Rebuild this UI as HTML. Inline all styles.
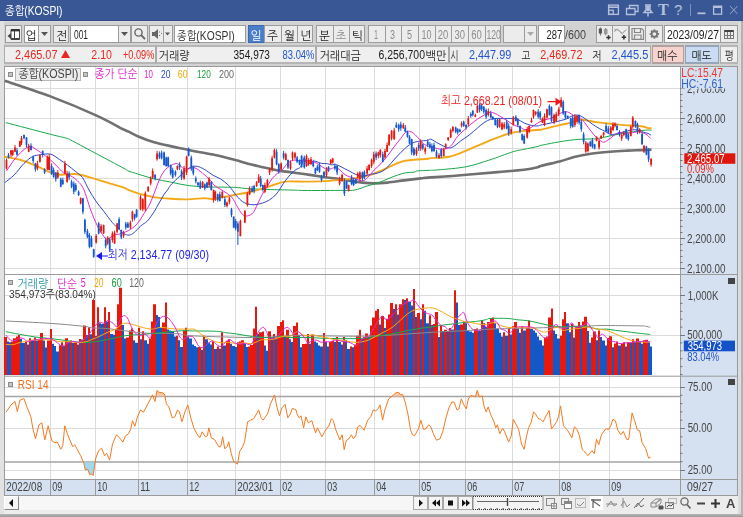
<!DOCTYPE html>
<html lang="ko"><head><meta charset="utf-8"><title>종합(KOSPI)</title>
<style>
*{box-sizing:border-box;margin:0;padding:0}
html,body{width:743px;height:517px;overflow:hidden;background:#d2d2d2;}
body{position:relative;font-family:"Liberation Sans","NanumGothic","Noto Sans CJK KR",sans-serif;font-size:11px;color:#111;line-height:1}
.a{position:absolute;white-space:nowrap}
#title{left:0;top:0;width:743px;height:21px;background:#3a5795;color:#fff;border-bottom:1px solid #30498a}
#title span{position:absolute;left:5px;top:4px;font-size:12px;letter-spacing:-0.3px}
.btn{white-space:nowrap;overflow:hidden;position:absolute;top:25px;height:18px;background:#ececec;border:1px solid #9c9c9c;text-align:center;font-size:12px;line-height:16px;color:#111}
.inp{white-space:nowrap;overflow:hidden;position:absolute;top:25px;height:18px;background:#fff;border:1px solid #9c9c9c;font-size:11px;line-height:16px;color:#333;padding-left:3px}
.dis{color:#8c8c8c}
.cell{position:absolute;top:45px;height:19px;background:#efefef;border:1px solid #aaa;border-top:2px solid #b6b6b6;border-bottom:2px solid #b6b6b6;font-size:11px;line-height:15px}
.cell span{position:absolute;top:0;white-space:nowrap}
.red{color:#e8281e}.blue{color:#2255cc}
.ko{font-size:12px}
</style></head><body>
<div class="a" style="left:0;top:21px;width:743px;height:1px;background:#dadada"></div>
<div class="a" style="left:0;top:496px;width:743px;height:18px;background:#ececec"></div>
<div class="a" style="left:0;top:21px;width:4px;height:496px;background:#e2e2e2"></div>
<div class="a" style="left:738px;top:21px;width:3px;height:496px;background:#dcdcdc"></div>
<div class="a" style="left:740.500px;top:21px;width:2.500px;height:496px;background:#b2b2b2"></div>
<div id="title" class="a">
<svg class="a" style="left:600px;top:0" width="143" height="21" viewBox="600 0 143 21" fill="none" stroke="#b4c0dc" stroke-width="1.3">
<rect x="608.6" y="5.1" width="9.8" height="9.3"/><path d="M608.6 7.2h9.8" stroke-width="1.6"/><rect x="608.6" y="10.2" width="4.6" height="4.2"/>
<path d="M629.5 8.5v-3h8.5v6h-3M626.5 8.5h8.500v6h-8.500z"/>
<path d="M645 5h6M646 5.500v4.500l-2 2.500h8l-2-2.500v-4.500M648 12.500v4" stroke-width="1.5"/><path d="M646.500 6h3v5h-3z" fill="#b4c0dc" stroke="none"/>
<path d="M697.500 13.300h8" stroke-width="1.800"/>
<rect x="713.600" y="6.200" width="8" height="8"/><path d="M713.600 7h8" stroke-width="2"/>
<path d="M730 6l7.500 8M737.500 6l-7.500 8" stroke-width="1" stroke="#93a3c8"/>
<path d="M690.500 4v12" stroke="#7f90b8" stroke-width="1"/>
</svg>
<div class="a" style="left:658px;top:1px;font-family:'Liberation Serif',serif;font-size:16px;font-weight:bold;color:#b4c0dc;line-height:18px">T</div>
<div class="a" style="left:674px;top:2px;font-size:15px;color:#b4c0dc;line-height:16px">?</div>
</div>
<div class="btn " style="left:5px;width:17.0px;"><svg width="15" height="16" viewBox="0 0 15 16" style="position:absolute;left:0;top:0"><path d="M5 3.500h8.500v10h-8.500z" fill="#fff" stroke="#444" stroke-width="1"/><path d="M5 4.200h8.500" stroke="#333" stroke-width="2.400"/><path d="M8.500 5v8.500" stroke="#444"/><path d="M1.500 10l3.500-3v6z" fill="#444"/><path d="M5 12.800h8" stroke="#444" stroke-width="1.600"/></svg></div>
<div class="btn " style="left:24px;width:14.0px;background:#fff;border-right:none"></div>
<div class="btn " style="left:38px;width:13.0px;"><svg width="7" height="4" viewBox="0 0 7 4" style="position:absolute;left:50%;top:6px;margin-left:-4px"><path d="M0 0h7l-3.500 4z" fill="#555"/></svg></div>
<div class="btn " style="left:53px;width:16.0px;"></div>
<div class="inp" style="left:70px;width:49px;"></div>
<div class="btn " style="left:118px;width:13.0px;"><svg width="7" height="4" viewBox="0 0 7 4" style="position:absolute;left:50%;top:6px;margin-left:-4px"><path d="M0 0h7l-3.500 4z" fill="#555"/></svg></div>
<div class="btn " style="left:131px;width:17.0px;"><svg width="15" height="16" viewBox="0 0 15 16" style="position:absolute;left:0;top:0" fill="none" stroke="#666" stroke-width="1.400"><circle cx="6.500" cy="6.500" r="3.600"/><path d="M9.200 9.200l3.800 4" stroke-width="1.900"/></svg></div>
<div class="btn " style="left:149px;width:15.0px;"><svg width="13" height="16" viewBox="0 0 13 16" style="position:absolute;left:0;top:0"><path d="M2 6h2.500l3.500-3v10l-3.500-3h-2.500z" fill="#666"/><path d="M9.500 5.500v1M9.500 9v1M11 7.500h1" stroke="#777" stroke-width="1.200"/></svg></div>
<div class="btn " style="left:163px;width:10.0px;"><svg width="5" height="4" viewBox="0 0 7 4" style="position:absolute;left:50%;top:6px;margin-left:-3px"><path d="M0 0h7l-3.500 4z" fill="#555"/></svg></div>
<div class="inp" style="left:174px;width:72px;"></div>
<div class="btn " style="left:247.8px;width:17.5px;background:#4a7ecb;color:#fff;border-color:#3c69b0;"></div>
<div class="btn " style="left:264.3px;width:17.5px;"></div>
<div class="btn " style="left:280.8px;width:17.5px;"></div>
<div class="btn " style="left:297.3px;width:16.1px;"></div>
<div class="btn " style="left:316.2px;width:17.6px;"></div>
<div class="btn " style="left:332.8px;width:17.6px;"></div>
<div class="btn " style="left:349.4px;width:15.8px;"></div>
<div class="btn " style="left:368px;width:17.5px;"></div>
<div class="btn " style="left:384.5px;width:17.7px;"></div>
<div class="btn " style="left:401.2px;width:17.8px;"></div>
<div class="btn " style="left:418px;width:17.6px;"></div>
<div class="btn " style="left:434.6px;width:17.8px;"></div>
<div class="btn " style="left:451.4px;width:17.8px;"></div>
<div class="btn " style="left:468.2px;width:17.7px;"></div>
<div class="btn " style="left:484.9px;width:15.7px;"></div>
<div class="btn " style="left:503px;width:22.0px;border-right:none"></div>
<div class="btn " style="left:524px;width:13.0px;"><svg width="7" height="4" viewBox="0 0 7 4" style="position:absolute;left:50%;top:6px;margin-left:-4px"><path d="M0 0h7l-3.500 4z" fill="#aaa"/></svg></div>
<div class="inp" style="left:538px;width:27px;"></div>
<div class="btn " style="left:595.5px;width:17.5px;"><svg width="16" height="16" viewBox="0 0 16 16" style="position:absolute;left:0;top:0"><path d="M3.400 1.400v8.200M8.700 2v7.200" stroke="#777"/><rect x="1.800" y="2.500" width="3.200" height="5" fill="#555"/><rect x="6.900" y="3" width="3.600" height="5" fill="#999"/><path d="M9.300 11.400h4.400M11.500 9.200v4.400" stroke="#333" stroke-width="1.500"/></svg></div>
<div class="btn " style="left:612.4px;width:17.0px;"><svg width="16" height="16" viewBox="0 0 16 16" style="position:absolute;left:0;top:0" fill="none"><path d="M1.200 5.500l3-2.500 5 4.500 4-4" stroke="#888" stroke-width="1"/><path d="M1.200 3l4.500 1.500 4 4" stroke="#aaa" stroke-width="1"/><path d="M8.700 11.300h4.400M10.900 9.100v4.400" stroke="#333" stroke-width="1.500"/></svg></div>
<div class="btn " style="left:628.8px;width:17.2px;"><svg width="16" height="16" viewBox="0 0 16 16" style="position:absolute;left:0;top:0" fill="none" stroke="#888" stroke-width="1.200"><path d="M2 2.500h9.500l2 1.800v9h-11.500z"/><path d="M4.500 2.500v4h6v-4M4.500 13.300v-4.300h6.500v4.300"/></svg></div>
<div class="btn " style="left:645.4px;width:17.6px;"><svg width="16" height="16" viewBox="0 0 16 16" style="position:absolute;left:0;top:0"><g transform="translate(8.400 8)"><circle r="2.700" fill="none" stroke="#777" stroke-width="1.900"/><rect x="-0.900" y="-4.700" width="1.800" height="1.800" fill="#777" transform="rotate(0)"/><rect x="-0.900" y="-4.700" width="1.800" height="1.800" fill="#777" transform="rotate(45)"/><rect x="-0.900" y="-4.700" width="1.800" height="1.800" fill="#777" transform="rotate(90)"/><rect x="-0.900" y="-4.700" width="1.800" height="1.800" fill="#777" transform="rotate(135)"/><rect x="-0.900" y="-4.700" width="1.800" height="1.800" fill="#777" transform="rotate(180)"/><rect x="-0.900" y="-4.700" width="1.800" height="1.800" fill="#777" transform="rotate(225)"/><rect x="-0.900" y="-4.700" width="1.800" height="1.800" fill="#777" transform="rotate(270)"/><rect x="-0.900" y="-4.700" width="1.800" height="1.800" fill="#777" transform="rotate(315)"/></g></svg></div>
<div class="inp" style="left:664px;width:57px;"></div>
<div class="btn " style="left:720px;width:18.0px;"><svg width="16" height="16" viewBox="0 0 16 16" style="position:absolute;left:0;top:0" fill="none" stroke="#777"><rect x="3.500" y="4.500" width="9" height="8" /><path d="M3.500 5h9" stroke="#444" stroke-width="2"/><path d="M6.500 6v6.500M9.500 6v6.500M3.500 9.500h9"/></svg></div>
<div class="cell" style="left:4px;width:152px;"><svg width="9" height="8" viewBox="0 0 9 8" style="position:absolute;left:56px;top:3px"><path d="M0 8l4.500-8l4.500 8z" fill="#e8281e"/></svg></div>
<div class="cell" style="left:156px;width:160px;"></div>
<div class="cell" style="left:316px;width:133px;"></div>
<div class="cell" style="left:449px;width:202px;"></div>
<div class="cell" style="left:652px;width:32px;background:#f8d2cc;border-color:#b0a0a0"></div>
<div class="cell" style="left:685px;width:34px;background:#c9dcf3;border-color:#98a4b8"></div>
<div class="cell" style="left:720px;width:18px;"></div>
<svg class="a" style="left:0;top:64px;will-change:transform" width="743" height="448" viewBox="0 64 743 448" font-family="'Liberation Sans','NanumGothic','Noto Sans CJK KR',sans-serif" font-size="11">
<rect x="4.500" y="66.500" width="733" height="429" fill="#fff" stroke="#9a9a9a"/>
<rect x="680" y="67" width="57" height="428" fill="#d5e1f0"/>
<rect x="5" y="480" width="732" height="15" fill="#d5e1f0"/>
<path d="M5 118.5H680 M5 148.5H680 M5 178.5H680 M5 208.5H680 M5 238.5H680 M5 268.5H680 M5 88.5H680 M5 295.5H680 M5 335.5H680 M5 387.5H680 M5 428.5H680 M5 470.5H680 M50.5 67V480 M95.5 67V480 M138.5 67V480 M187.5 67V480 M235.5 67V480 M280.5 67V480 M325.5 67V480 M374.5 67V480 M419.5 67V480 M465.5 67V480 M512.5 67V480 M559.5 67V480 M609.5 67V480" stroke="#dcdcdc" stroke-width="1" fill="none"/>
<path d="M7 341.4H9V375H7zM9 342.2H11V375H9zM20 339H22V375H20zM22 342.9H25V375H22zM27 344.5H29V375H27zM31 340.6H34V375H31zM36 340.6H38V375H36zM43 340.6H45V375H43zM45 347.6H47V375H45zM52 343.7H54V375H52zM54 346.1H56V375H54zM56 351.6H59V375H56zM63 346.1H65V375H63zM68 341.4H70V375H68zM72 342.9H74V375H72zM77 344.5H79V375H77zM81 339.5H83V375H81zM86 335.1H88V375H86zM90 334.3H92V375H90zM95 335.7H97V375H95zM99 323.3H101V375H99zM101 324.1H104V375H101zM106 321.5H108V375H106zM110 333.9H113V375H110zM113 334.8H115V375H113zM122 325H124V375H122zM124 338.4H126V375H124zM133 340.2H135V375H133zM135 342.8H138V375H135zM140 339.3H142V375H140zM144 340.2H147V375H144zM147 343.7H149V375H147zM156 314.9H158V375H156zM158 317H160V375H158zM160 327.7H162V375H160zM167 329.5H169V375H167zM169 330.4H171V375H169zM171 331.3H174V375H171zM174 336.6H176V375H174zM178 340.2H180V375H178zM180 346.9H183V375H180zM187 336.6H189V375H187zM189 338.4H192V375H189zM192 344.6H194V375H192zM194 345.9H196V375H194zM196 347.3H198V375H196zM201 349.9H203V375H201zM205 339.3H208V375H205zM208 342.8H210V375H208zM210 344.6H212V375H210zM214 349.1H217V375H214zM219 348.7H221V375H219zM223 345.5H226V375H223zM230 343.7H232V375H230zM232 345.9H235V375H232zM235 346.9H237V375H235zM244 343.7H246V375H244zM246 346.9H248V375H246zM257 333.9H259V375H257zM264 345.5H266V375H264zM266 350.8H268V375H266zM271 337.5H273V375H271zM275 338.4H277V375H275zM284 336.6H286V375H284zM289 339.3H291V375H289zM291 341.9H293V375H291zM298 334.8H300V375H298zM300 347.3H302V375H300zM309 343.7H311V375H309zM314 341.6H316V375H314zM316 342.8H318V375H316zM318 345.5H320V375H318zM320 346.4H323V375H320zM325 341.9H327V375H325zM327 346.4H329V375H327zM334 341.9H336V375H334zM338 341.9H341V375H338zM341 344.6H343V375H341zM345 340.2H347V375H345zM347 349.1H350V375H347zM352 347.3H354V375H352zM361 338.4H363V375H361zM368 336.6H370V375H368zM379 324.5H381V375H379zM384 328.1H386V375H384zM393 309H395V375H393zM397 314.4H399V375H397zM404 300.1H406V375H404zM408 301.9H411V375H408zM411 305.5H413V375H411zM415 317H417V375H415zM420 319.2H422V375H420zM424 310.8H426V375H424zM426 323.3H429V375H426zM431 325H433V375H431zM438 337H440V375H438zM442 330.9H444V375H442zM447 330.9H449V375H447zM451 329.5H454V375H451zM456 302.4H458V375H456zM458 325H460V375H458zM465 323.3H467V375H465zM467 330.9H469V375H467zM469 331.6H472V375H469zM472 332.7H474V375H472zM478 330.4H481V375H478zM483 323.3H485V375H483zM485 326.8H487V375H485zM494 323.3H496V375H494zM496 328.6H499V375H496zM499 332.7H501V375H499zM501 336.6H503V375H501zM505 335.7H508V375H505zM510 334.5H512V375H510zM517 328.6H519V375H517zM519 332.7H521V375H519zM523 330.4H526V375H523zM530 329.1H533V375H530zM533 330.4H535V375H533zM535 332.7H537V375H535zM537 336.6H539V375H537zM539 340.2H542V375H539zM542 345.5H544V375H542zM553 330.4H555V375H553zM555 333.9H557V375H555zM557 338.4H560V375H557zM566 323.3H569V375H566zM569 332.2H571V375H569zM573 337.5H575V375H573zM580 325.6H582V375H580zM587 330.9H589V375H587zM589 342.8H591V375H589zM596 340.2H598V375H596zM600 337H602V375H600zM602 340.5H605V375H602zM605 345.5H607V375H605zM612 347.3H614V375H612zM618 345.5H621V375H618zM625 346.4H627V375H625zM630 342.8H632V375H630zM634 342.3H636V375H634zM639 341.6H641V375H639zM641 343.7H643V375H641zM648 341.9H650V375H648zM650 346.4H652V375H650z" fill="#1458c8"/>
<path d="M4 337H7V375H4zM11 341.4H13V375H11zM13 338.3H16V375H13zM16 336.4H18V375H16zM18 335.1H20V375H18zM25 341.4H27V375H25zM29 338.3H31V375H29zM34 337.5H36V375H34zM38 339.8H40V375H38zM40 333.1H43V375H40zM47 340.6H50V375H47zM50 328.9H52V375H50zM59 345.3H61V375H59zM61 342.2H63V375H61zM65 338.3H68V375H65zM70 340.6H72V375H70zM74 342.2H77V375H74zM79 339H81V375H79zM83 325.4H86V375H83zM88 327.3H90V375H88zM92 300.1H95V375H92zM97 307.2H99V375H97zM104 307.2H106V375H104zM108 312H110V375H108zM115 329.5H117V375H115zM117 304.2H119V375H117zM119 287.7H122V375H119zM126 337.5H129V375H126zM129 330.4H131V375H129zM131 328.6H133V375H131zM138 327.7H140V375H138zM142 331.3H144V375H142zM149 338.4H151V375H149zM151 321.5H153V375H151zM153 304.2H156V375H153zM162 322.4H165V375H162zM165 302.4H167V375H165zM176 335.7H178V375H176zM183 330.4H185V375H183zM185 327.7H187V375H185zM198 346.9H201V375H198zM203 335.7H205V375H203zM212 341.6H214V375H212zM217 346.4H219V375H217zM221 332.2H223V375H221zM226 341H228V375H226zM228 339.3H230V375H228zM237 342.3H239V375H237zM239 341.6H241V375H239zM241 340.2H244V375H241zM248 346.4H250V375H248zM250 345.1H253V375H250zM253 328.6H255V375H253zM255 306.7H257V375H255zM259 332.2H262V375H259zM262 331.6H264V375H262zM268 331.3H271V375H268zM273 333.9H275V375H273zM277 325.9H280V375H277zM280 322H282V375H280zM282 320.2H284V375H282zM286 329.8H289V375H286zM293 325.9H296V375H293zM296 322.4H298V375H296zM302 344.1H305V375H302zM305 343.7H307V375H305zM307 333.9H309V375H307zM311 334.5H314V375H311zM323 333H325V375H323zM329 341.9H332V375H329zM332 341H334V375H332zM336 337H338V375H336zM343 337H345V375H343zM350 346.4H352V375H350zM354 344.6H356V375H354zM356 335.7H359V375H356zM359 329.8H361V375H359zM363 337H365V375H363zM365 333.4H368V375H365zM370 325.6H372V375H370zM372 317.4H375V375H372zM375 310.8H377V375H375zM377 309H379V375H377zM381 316.1H384V375H381zM386 318.8H388V375H386zM388 314.4H390V375H388zM390 303.1H393V375H390zM395 304.2H397V375H395zM399 304.2H402V375H399zM402 299.2H404V375H402zM406 298.3H408V375H406zM413 288.9H415V375H413zM417 313.1H420V375H417zM422 304.2H424V375H422zM429 315.2H431V375H429zM433 324.1H435V375H433zM435 312H438V375H435zM440 325.9H442V375H440zM444 329.8H447V375H444zM449 328.1H451V375H449zM454 290.3H456V375H454zM460 324.5H463V375H460zM463 321.5H465V375H463zM474 329.1H476V375H474zM476 328.6H478V375H476zM481 320.2H483V375H481zM487 322H490V375H487zM490 318.5H492V375H490zM492 317.4H494V375H492zM503 332.2H505V375H503zM508 328.6H510V375H508zM512 326.3H514V375H512zM514 322H517V375H514zM521 326.3H523V375H521zM526 327.7H528V375H526zM528 320.6H530V375H528zM544 337.5H546V375H544zM546 336.6H548V375H546zM548 317.4H551V375H548zM551 308.5H553V375H551zM560 335.7H562V375H560zM562 319.2H564V375H562zM564 312H566V375H564zM571 323.8H573V375H571zM575 326.8H578V375H575zM578 322H580V375H578zM582 321.5H584V375H582zM584 316.7H587V375H584zM591 337.5H593V375H591zM593 331.6H596V375H593zM598 330.4H600V375H598zM607 338H609V375H607zM609 336.2H612V375H609zM614 343.4H616V375H614zM616 341.6H618V375H616zM621 343.7H623V375H621zM623 342.3H625V375H623zM627 342.3H630V375H627zM632 339.3H634V375H632zM636 338.4H639V375H636zM643 340.2H645V375H643zM645 339.8H648V375H645z" fill="#e8180c"/>
<path d="M5.9 321C13.4 321.4 37.7 322.5 50.9 323.4C64.2 324.3 78.9 325.8 85.4 326.5C91.9 327.2 86.3 327.4 90 327.7C93.7 328.1 101.9 328.1 107.8 328.6C113.7 329.1 119.7 330.2 125.6 330.9C131.5 331.6 137.4 332.6 143.4 333C149.3 333.5 155.2 333.3 161.2 333.4C167.1 333.5 174.2 333.5 179 333.9C183.8 334.3 182.2 335.2 190 335.7C197.8 336.2 213.7 336.7 225.6 337C237.4 337.3 250.4 337.7 261.2 337.5C271.9 337.3 279.3 336 290 335.7C300.7 335.4 313.7 335.8 325.6 335.9C337.4 336 350.4 336.4 361.2 336.2C371.9 336.1 382.2 335.6 390 335.2C397.8 334.8 401.9 334.3 407.8 333.9C413.7 333.5 419.7 333.1 425.6 332.7C431.5 332.3 437.4 331.9 443.4 331.6C449.3 331.3 455.2 331.2 461.2 330.9C467.1 330.6 474.2 330.1 479 329.8C483.8 329.5 485.2 329.3 490 329.1C494.8 328.9 498.9 328.8 507.8 328.6C516.7 328.4 531.4 328 543.4 327.7C555.3 327.4 570.4 326.9 579.5 326.5C588.6 326.2 591.8 325.7 597.8 325.6C603.8 325.4 608.5 325.5 615.6 325.6C622.7 325.6 635.5 325.8 640.5 325.9C645.5 326 644.2 326 645.8 326.3C647.5 326.5 649.5 327.2 650.3 327.3" fill="none" stroke="#8a8a8a" stroke-width="1"/>
<path d="M5.9 331.7C8.2 332.1 14.7 333.5 19.6 334.3C24.6 335.2 30.1 336.3 35.3 337C40.5 337.7 45.7 338 50.9 338.6C56.2 339.2 61.9 340 66.6 340.6C71.3 341.2 75.2 341.9 79.1 342.2C83 342.4 85.8 342.6 90 342.3C94.2 342 99.8 341 104.2 340.2C108.7 339.4 113.1 338.2 116.7 337.5C120.2 336.7 122.6 336.2 125.6 335.7C128.6 335.3 131.5 335 134.5 334.8C137.4 334.6 140.4 334.7 143.4 334.5C146.3 334.2 149.3 333.7 152.3 333.4C155.2 333.1 158.2 333 161.2 332.7C164.1 332.4 167.1 331.9 170.1 331.6C173 331.3 176 331.1 179 330.9C181.9 330.7 186 330.6 187.9 330.6C189.7 330.6 185.2 330.8 190 330.9C194.8 331 210.8 331 216.7 331.3C222.6 331.6 222.3 332.2 225.6 332.7C228.8 333.1 232.7 333.4 236.3 333.9C239.8 334.4 243.4 335.2 246.9 335.7C250.5 336.2 253.8 336.7 257.6 337C261.5 337.3 265.9 337.6 270.1 337.5C274.2 337.4 279.2 336.6 282.5 336.6C285.8 336.6 285.8 337.3 290 337.5C294.2 337.6 301.9 337.3 307.8 337.5C313.7 337.6 319.7 338.2 325.6 338.4C331.5 338.6 337.4 338.7 343.4 338.7C349.3 338.7 356.7 338.6 361.2 338.4C365.6 338.2 367.1 337.9 370.1 337.5C373 337 375.7 336.3 379 335.7C382.3 335.2 386.2 334.8 389.8 334.2C393.4 333.6 397.1 332.9 400.7 332.2C404.3 331.4 407.8 330.5 411.4 329.8C414.9 329.2 418.5 328.6 422 328.1C425.6 327.6 429.1 327.3 432.7 326.8C436.3 326.3 439.8 325.5 443.4 325C446.9 324.5 450.5 324.2 454.1 323.8C457.6 323.3 461.2 322.8 464.7 322.4C468.3 322 471.9 321.9 475.4 321.5C479 321 483.7 320.2 486.1 319.7C488.5 319.2 486.4 318.7 490 318.5C493.6 318.2 503.3 318.2 507.8 318.5C512.2 318.7 513.1 319.3 516.7 319.7C520.2 320.1 525.3 320.3 529.1 320.9C533 321.5 536.3 322.5 539.8 323.3C543.4 324 546.9 325 550.5 325.6C554.1 326.2 557.6 326.7 561.2 326.8C564.7 326.9 568.7 326.4 571.9 326.3C575 326.2 577.9 326.3 580 326.3C582.1 326.3 583.1 326.3 584.3 326.3C585.5 326.3 584.9 325.8 587.1 326.3C589.4 326.8 594.5 328.7 597.8 329.1C601.1 329.6 603.7 328.9 606.7 329.1C609.7 329.3 612.3 330 615.6 330.4C618.8 330.8 622.7 331.2 626.3 331.6C629.8 332.1 632.9 332.6 636.9 333C640.9 333.5 648.1 334.2 650.3 334.5" fill="none" stroke="#18a848" stroke-width="1"/>
<path d="M5.9 344.5C7.1 344.5 11.1 344.8 13.4 344.5C15.7 344.2 17 343.3 19.6 342.6C22.3 342 25.9 341.1 29 340.6C32.2 340.1 34.8 339.9 38.4 339.8C42.1 339.7 47.3 339.5 50.9 339.8C54.6 340.1 57.2 341.4 60.3 341.7C63.5 342 66.6 341.5 69.7 341.7C72.9 341.9 76.2 342.7 79.1 342.6C82 342.6 85.1 341.8 86.9 341.4C88.8 341 88 341 90 340.2C92 339.4 95.9 337.9 98.9 336.6C101.9 335.3 105.1 333.3 107.8 332.2C110.5 331 112.5 330.8 114.9 329.5C117.3 328.1 120 325.2 122 324.1C124.1 323.1 125.3 323.1 127.4 323.3C129.4 323.4 131.8 324.3 134.5 325C137.2 325.8 140.4 327 143.4 327.7C146.3 328.4 149.3 329.2 152.3 329.1C155.2 329.1 158.2 327.4 161.2 327.3C164.1 327.3 167.1 328.3 170.1 328.6C173 328.9 176 329 179 329.1C181.9 329.2 186 329.1 187.9 329.1C189.7 329.1 188.8 329.1 190 329.1C191.2 329.2 193.6 328.7 195.3 329.5C197.1 330.3 198.6 332.4 200.7 333.9C202.8 335.4 205.4 337.1 207.8 338.4C210.2 339.7 212.5 340.8 214.9 341.6C217.3 342.3 219.7 342.7 222 342.8C224.4 342.9 226.8 342.1 229.1 342.3C231.5 342.4 233.9 343.6 236.3 343.7C238.6 343.8 241 342.8 243.4 342.8C245.8 342.8 248.4 343.8 250.5 343.7C252.6 343.6 254.1 342.9 255.8 342.3C257.6 341.6 259.4 340.2 261.2 339.8C263 339.4 264.4 339.9 266.5 339.8C268.6 339.7 271.6 339.7 273.6 339.3C275.7 338.9 277.2 338 279 337.5C280.7 337 282.5 336.5 284.3 336.2C286.1 336 287.7 337 289.8 336.2C292 335.5 295 331.9 297.1 331.6C299.2 331.4 300.7 334.1 302.5 334.8C304.2 335.5 306 335.7 307.8 335.7C309.6 335.7 311.4 334.7 313.1 334.8C314.9 334.9 316.4 335.8 318.5 336.2C320.5 336.7 323.2 337 325.6 337.5C328 338 330.3 338.8 332.7 339.3C335.1 339.7 337.4 339.9 339.8 340.2C342.2 340.5 344.6 340.7 346.9 341C349.3 341.4 351.7 342.1 354.1 342.3C356.4 342.4 358.8 342.3 361.2 341.9C363.5 341.6 365.9 341 368.3 340.2C370.7 339.3 373 337.8 375.4 336.6C377.8 335.4 380.1 333.9 382.5 332.7C384.9 331.4 387.4 330.6 389.8 329C392.3 327.5 394.7 325.3 397.1 323.3C399.5 321.2 401.9 318.7 404.2 316.7C406.6 314.7 409 312.6 411.4 311.3C413.7 310.1 416.1 309.6 418.5 309C420.8 308.5 423.5 308.3 425.6 308.1C427.7 307.9 429.1 307.6 430.9 307.8C432.7 307.9 434.2 308.2 436.3 309C438.3 309.8 441 311.3 443.4 312.6C445.8 313.9 448.1 315.6 450.5 316.7C452.9 317.8 455.2 318.4 457.6 319.2C460 320 462.4 320.9 464.7 321.5C467.1 322.1 469.5 322.3 471.9 322.7C474.2 323.2 476.6 323.8 479 324.1C481.3 324.4 484.2 324.7 486.1 324.5C487.9 324.4 488.5 323.6 490 323.3C491.5 323 493.6 322.3 495.3 322.7C497.1 323.1 498.6 324.8 500.7 325.6C502.8 326.3 505.1 327 507.8 327.3C510.5 327.7 513.7 327.6 516.7 327.7C519.7 327.8 522.6 327.6 525.6 327.7C528.6 327.8 531.8 327.4 534.5 328.1C537.2 328.7 539.5 331 541.6 331.6C543.7 332.2 545.2 332.1 546.9 331.6C548.7 331.1 550.5 329.3 552.3 328.6C554.1 327.9 555.8 327.1 557.6 327.3C559.4 327.6 560.9 330.1 563 330.4C565 330.7 567.3 329.5 570.1 329.1C572.8 328.8 576.7 328.8 579.5 328.4C582.2 328.1 584.1 327 586.6 327C589.1 327 591.8 328.2 594.2 328.6C596.7 329 599.3 329.2 601.4 329.5C603.4 329.8 604.3 329.6 606.7 330.4C609.1 331.1 612.6 332.7 615.6 333.9C618.6 335.2 621.5 336.8 624.5 338C627.4 339.2 630.7 340.4 633.4 341C636 341.7 637.7 341.7 640.5 341.9C643.3 342.1 648.7 342.2 650.3 342.3" fill="none" stroke="#f4a818" stroke-width="1"/>
<path d="M5.9 335.1C6.6 335.9 8.7 338.9 10.3 339.8C11.8 340.7 13.4 340.9 15 340.6C16.5 340.3 18.1 338.2 19.6 337.9C21.2 337.7 23 338.5 24.3 339C25.6 339.6 25.6 341.3 27.5 341.4C29.3 341.5 33 340.2 35.3 339.8C37.6 339.4 39.2 339.2 41.6 339C43.9 338.8 47 338.2 49.4 338.6C51.7 339 53.6 340.1 55.6 341.4C57.7 342.6 60.1 345.7 61.9 346.1C63.7 346.5 64.8 344.5 66.6 343.7C68.4 342.9 70.8 341.6 72.9 341.4C74.9 341.1 77 342.7 79.1 342.2C81.2 341.6 83.6 339.8 85.4 338.3C87.2 336.7 88.6 334.8 90 333C91.4 331.3 92.1 329.5 93.6 327.7C95 325.9 97.1 323.1 98.9 322.4C100.7 321.6 102.8 323.6 104.2 323.3C105.7 323 106.3 320.6 107.8 320.6C109.3 320.6 111.6 322.2 113.1 323.3C114.6 324.3 115.5 327.4 116.7 326.8C117.9 326.2 119.1 321.6 120.2 319.7C121.4 317.8 122.6 315.9 123.8 315.6C125 315.3 126.2 316.2 127.4 317.9C128.6 319.6 129.7 323.6 130.9 325.9C132.1 328.3 133 330.5 134.5 332.2C136 333.8 138 335.4 139.8 335.7C141.6 336 143.5 333.5 145.2 333.9C146.8 334.3 148.4 338.2 149.6 338C150.8 337.9 151.1 335.5 152.3 333C153.5 330.6 155.2 325.9 156.7 323.3C158.2 320.6 159.5 318.5 161.2 317.4C162.8 316.3 164.7 315.8 166.5 316.7C168.3 317.5 170.2 320.2 171.9 322.4C173.5 324.5 175.1 327.3 176.3 329.5C177.5 331.7 177.9 334.1 179 335.7C180 337.3 181 339.1 182.5 339.3C184 339.4 186.6 337 187.9 336.6C189.1 336.2 189 336.5 190 336.6C191 336.7 192.3 335.9 193.8 337.5C195.3 339.1 197.3 344.8 198.9 346.4C200.5 348 201.9 347.7 203.3 347.3C204.8 346.8 206.3 344.8 207.8 343.7C209.3 342.7 210.8 340.9 212.2 341C213.7 341.2 215.2 343.7 216.7 344.6C218.2 345.5 219.7 346.8 221.1 346.4C222.6 345.9 224.1 343 225.6 341.9C227.1 340.8 228.6 339.7 230 339.8C231.5 340 232.9 342.1 234.5 342.8C236.1 343.5 238 344 239.8 344.1C241.6 344.2 243.4 343.3 245.2 343.4C246.9 343.5 248.9 345.4 250.5 344.6C252.1 343.8 253.5 340.8 254.9 338.4C256.4 336 258 332.2 259.4 330.4C260.8 328.5 262.1 327.1 263.3 327.3C264.5 327.6 265.5 329.8 266.5 331.6C267.5 333.5 268 337.3 269.2 338.4C270.4 339.4 272.1 338.5 273.6 338C275.1 337.6 276.6 337 278.1 335.7C279.6 334.4 281 331.8 282.5 330.4C284 329 285.7 327.5 287 327.3C288.3 327.2 289.1 328.5 290.3 329.7C291.4 330.8 292.7 334.1 293.8 334.4C295 334.7 296 331.8 297.1 331.6C298.3 331.5 299.3 332.3 300.7 333.4C302 334.5 303.9 336.7 305.1 338.4C306.3 340 306.6 343 307.8 343.4C309 343.7 310.8 341 312.2 340.5C313.7 340 315.2 339.9 316.7 340.2C318.2 340.5 319.7 342.1 321.1 342.3C322.6 342.5 324.1 341.6 325.6 341.6C327.1 341.5 328.6 342.2 330 341.9C331.5 341.7 333 340.4 334.5 340.2C336 339.9 337.4 340.3 338.9 340.5C340.4 340.8 341.7 341.3 343.4 341.6C345 341.9 347.2 341.9 348.7 342.3C350.2 342.7 351.1 343.1 352.3 343.7C353.5 344.3 354.7 346 355.8 345.9C357 345.7 358.2 344.1 359.4 342.8C360.6 341.6 361.5 339.4 363 338.4C364.4 337.3 366.8 337.7 368.3 336.6C369.8 335.5 370.7 333.5 371.9 331.6C373 329.8 374.2 327.6 375.4 325.6C376.6 323.6 377.8 321.3 379 319.7C380.2 318.1 381.3 316.1 382.5 316.1C383.7 316.1 384.9 319.4 386.1 319.7C387.3 320 388.6 318.8 389.8 317.9C391 317 392.3 315.4 393.2 314.4C394.1 313.3 394.1 313 395.3 311.7C396.6 310.4 398.9 308.3 400.7 306.7C402.5 305.2 404.4 303.3 406 302.4C407.6 301.5 409.1 301.8 410.5 301.4C411.8 301 412.7 299.4 414 300.1C415.4 300.9 417 304.2 418.5 306C420 307.8 421.4 309.6 422.9 310.8C424.4 312 425.9 312.8 427.4 313.5C428.8 314.2 430.3 313.7 431.8 314.9C433.3 316.1 434.8 318.9 436.3 320.6C437.7 322.3 439.2 324 440.7 325C442.2 326.1 443.8 326 445.2 326.8C446.5 327.6 447.5 329.8 448.7 329.8C449.9 329.9 450.9 329.2 452.3 327.3C453.6 325.5 455.2 321 456.7 318.8C458.2 316.6 460 315.4 461.2 314.4C462.4 313.3 462.8 311.2 463.8 312.6C464.9 313.9 466.1 319.7 467.4 322.4C468.7 325 470.2 327.2 471.9 328.6C473.5 330 475.7 330.8 477.2 330.9C478.7 331.1 479.6 330.5 480.7 329.5C481.9 328.5 483.3 325.3 484.3 325C485.3 324.7 486 328.3 487 327.7C488 327.1 488.7 322.7 490.3 321.7C491.8 320.6 494.5 320.3 496.2 321.5C498 322.6 499.2 327.1 500.7 328.6C502.2 330.1 503.6 329.6 505.1 330.4C506.6 331.2 508.1 333.7 509.6 333.4C511.1 333.1 512.5 329.7 514 328.6C515.5 327.5 517 327.1 518.5 326.8C520 326.5 521.3 326.8 522.9 326.8C524.5 326.8 526.5 326.7 528.3 326.8C530 327 532 326.9 533.6 327.7C535.2 328.5 536.6 330.1 538 331.6C539.5 333.1 541 335.5 542.5 336.6C544 337.7 545.5 339.1 546.9 338C548.4 337 549.9 332.6 551.4 330.4C552.9 328.1 554.4 324.9 555.8 324.5C557.3 324.1 558.8 327 560.3 327.7C561.8 328.4 563.3 329 564.7 328.6C566.2 328.2 568 326.5 569.2 325.6C570.4 324.6 570.8 322.4 571.9 322.7C572.9 323.1 574.1 327.1 575.4 327.7C576.8 328.3 578.5 326.6 579.9 326.2C581.3 325.8 582.7 325.9 583.9 325.3C585.1 324.7 586.1 322.2 587.2 322.5C588.3 322.9 589.6 325.9 590.6 327.3C591.6 328.7 592.4 329.9 593.2 330.9C594 331.9 594.4 331.9 595.1 333C595.9 334.1 596.6 337.3 597.8 337.5C599 337.6 600.8 333.8 602.2 333.9C603.7 334 605.2 336.8 606.7 338C608.2 339.2 609.7 340.4 611.1 341C612.6 341.7 614.1 341.5 615.6 341.9C617.1 342.4 618.6 343.6 620 343.7C621.5 343.9 622.9 343 624.5 342.8C626.1 342.7 628 343 629.8 342.8C631.6 342.6 633.4 341.8 635.2 341.6C636.9 341.4 638.7 341.7 640.5 341.6C642.3 341.5 644.2 341 645.8 341C647.5 341.1 649.5 341.8 650.3 341.9" fill="none" stroke="#e428d0" stroke-width="1"/>
<path d="M5 396.500H680M5 462H680" stroke="#a4a4a4" stroke-width="1.600" fill="none"/>
<clipPath id="ob"><rect x="5" y="377" width="675" height="19.300"/></clipPath><clipPath id="os"><rect x="5" y="462.400" width="675" height="17"/></clipPath>
<path d="M6 412.3L11 404.9L15 401.5L17.3 411.5L19.9 400.3L23.9 398.5L26.9 406.9L30.9 416.8L32.9 428.8L35.5 438.8L38.9 424.8L41.8 422.8L44.8 439.8L48.2 425.8L51.8 440.7L54.8 442.7L57.4 442.1L60.8 449.3L62.8 445.7L64.8 425.8L67.7 434.8L72.7 446.7L74.7 444.7L80.7 455.7L83.7 462.7L85.3 470L87.7 469.2L89.7 474.6L91.6 474L93.2 475.6L95.6 458.7L98.6 450.7L101.6 448.1L104.6 455.7L106.6 453.3L109.6 460.1L112.6 443.7L116.5 434.8L119.5 437.8L122.9 442.1L125.5 435.8L128.5 433.8L130.5 429.8L132.5 420.8L134.9 426.2L137.5 416.8L140.5 409.9L143.4 412.3L147.4 404.9L152 395.9L152.4 394.9L155 401.5L157 390.4L159 392.3L162.9 392.9L164.9 394.9L166.3 403.9L168.9 406.9L172.3 417.8L174.9 416.8L177.5 409.9L179.5 411.9L181.9 421.8L184.9 411.9L187.8 404.9L190.8 417.8L193.8 427.8L196.8 433.8L199.8 437.8L202.2 431.8L205.4 436.8L207.4 435.8L208.8 427.8L211.3 437.8L214.7 439.8L218.7 446.7L220.7 446.7L222.7 436.8L224.7 448.7L227.3 446.7L228.7 441.7L231.3 453.7L233.7 461.7L237.6 464.1L239.6 451.7L242.6 446.7L244.6 441.7L247.6 421.8L250.6 420.2L253.6 418.8L256.6 413.9L258.6 409.9L261.1 417.8L263.1 420.2L265.5 416.8L267.5 413.9L270.5 403.9L274.5 394.9L277.1 407.9L279.5 415.8L281.9 407.9L285.1 404.3L287.8 417.8L290.4 413.9L292.4 408.3L296 409.9L297 413.9L299 417.8L301 415.8L303.6 427.8L305.9 416.8L308.3 422.8L311.9 420.8L315.5 432.8L317.5 427.8L321.9 436.8L325.5 430.2L328.9 425.8L331.4 418.8L333.4 420.8L335.8 429.8L339.8 439.8L342.2 434.8L344.2 449.7L346.2 440.7L348.8 438.8L351.4 434.8L353.4 438.8L355.7 435.8L357.7 426.8L360.1 425.4L364.1 430.2L367.7 420.2L370.7 416.8L373.3 409.9L375.7 410.9L378.1 408.9L380 404.9L382.6 420.2L384.6 410.9L388.6 398.9L392.6 395.9L395.6 392.9L398.6 392.3L400.6 394.9L402.6 394.3L405.1 401.9L407.9 413.9L410.5 429.8L412.5 434.8L414.5 435.8L418.5 428.8L420.9 420.2L423.5 429.4L425.9 428.8L428.5 424.8L430.8 426.8L433.4 433.8L436.4 440.2L440 438.8L443 430.8L446 417.8L448.9 407.9L451.9 401.9L454.3 402.3L456.9 409.9L458.9 408.9L461.3 398.9L463.9 404.9L466.3 408.9L468.3 398.9L470.9 395.5L473.8 396.3L475.4 396.9L477.2 390.4L479.4 396.9L482.2 395.9L484.2 406.9L486.2 411.9L488.2 406.9L490.8 414.9L493.4 420.2L495.8 427.8L497.4 424.8L499.7 433.8L502.7 428.2L504.7 431.8L508.7 442.1L511.3 435.8L513.3 419.4L515.7 423.8L518.7 429.4L521.7 444.7L524.2 449.3L526.6 435.8L528.6 427.8L531.2 422.2L533.6 411.9L535.6 414.3L538.6 418.8L540.6 419.4L543 421.8L545.6 416.8L549.1 410.3L551.5 428.8L553.9 425.8L556.5 422.2L558.5 416.8L560.5 405.9L563.5 425.8L567.5 430.2L571.9 437.8L574.4 426.8L577 429.4L579.4 435.8L582.4 449.7L584 451.3L584.9 452.1L587.9 455.7L591.9 450.7L594.3 453.7L596.5 439.4L598.8 444.7L601.4 434.8L605.8 428.8L608.8 429.4L610.8 425.8L612.8 419.4L615.4 420.8L617.8 430.2L620.8 434.8L623.3 431.4L626.7 439.4L628.7 439.4L632.1 412.9L634.7 420.8L637.3 429.8L639.7 430.8L642.1 442.7L645.7 448.7L648.6 458.1L650.6 457.3L650.6 430L6 430z" fill="#f9c9a6" clip-path="url(#ob)"/>
<path d="M6 412.3L11 404.9L15 401.5L17.3 411.5L19.9 400.3L23.9 398.5L26.9 406.9L30.9 416.8L32.9 428.8L35.5 438.8L38.9 424.8L41.8 422.8L44.8 439.8L48.2 425.8L51.8 440.7L54.8 442.7L57.4 442.1L60.8 449.3L62.8 445.7L64.8 425.8L67.7 434.8L72.7 446.7L74.7 444.7L80.7 455.7L83.7 462.7L85.3 470L87.7 469.2L89.7 474.6L91.6 474L93.2 475.6L95.6 458.7L98.6 450.7L101.6 448.1L104.6 455.7L106.6 453.3L109.6 460.1L112.6 443.7L116.5 434.8L119.5 437.8L122.9 442.1L125.5 435.8L128.5 433.8L130.5 429.8L132.5 420.8L134.9 426.2L137.5 416.8L140.5 409.9L143.4 412.3L147.4 404.9L152 395.9L152.4 394.9L155 401.5L157 390.4L159 392.3L162.9 392.9L164.9 394.9L166.3 403.9L168.9 406.9L172.3 417.8L174.9 416.8L177.5 409.9L179.5 411.9L181.9 421.8L184.9 411.9L187.8 404.9L190.8 417.8L193.8 427.8L196.8 433.8L199.8 437.8L202.2 431.8L205.4 436.8L207.4 435.8L208.8 427.8L211.3 437.8L214.7 439.8L218.7 446.7L220.7 446.7L222.7 436.8L224.7 448.7L227.3 446.7L228.7 441.7L231.3 453.7L233.7 461.7L237.6 464.1L239.6 451.7L242.6 446.7L244.6 441.7L247.6 421.8L250.6 420.2L253.6 418.8L256.6 413.9L258.6 409.9L261.1 417.8L263.1 420.2L265.5 416.8L267.5 413.9L270.5 403.9L274.5 394.9L277.1 407.9L279.5 415.8L281.9 407.9L285.1 404.3L287.8 417.8L290.4 413.9L292.4 408.3L296 409.9L297 413.9L299 417.8L301 415.8L303.6 427.8L305.9 416.8L308.3 422.8L311.9 420.8L315.5 432.8L317.5 427.8L321.9 436.8L325.5 430.2L328.9 425.8L331.4 418.8L333.4 420.8L335.8 429.8L339.8 439.8L342.2 434.8L344.2 449.7L346.2 440.7L348.8 438.8L351.4 434.8L353.4 438.8L355.7 435.8L357.7 426.8L360.1 425.4L364.1 430.2L367.7 420.2L370.7 416.8L373.3 409.9L375.7 410.9L378.1 408.9L380 404.9L382.6 420.2L384.6 410.9L388.6 398.9L392.6 395.9L395.6 392.9L398.6 392.3L400.6 394.9L402.6 394.3L405.1 401.9L407.9 413.9L410.5 429.8L412.5 434.8L414.5 435.8L418.5 428.8L420.9 420.2L423.5 429.4L425.9 428.8L428.5 424.8L430.8 426.8L433.4 433.8L436.4 440.2L440 438.8L443 430.8L446 417.8L448.9 407.9L451.9 401.9L454.3 402.3L456.9 409.9L458.9 408.9L461.3 398.9L463.9 404.9L466.3 408.9L468.3 398.9L470.9 395.5L473.8 396.3L475.4 396.9L477.2 390.4L479.4 396.9L482.2 395.9L484.2 406.9L486.2 411.9L488.2 406.9L490.8 414.9L493.4 420.2L495.8 427.8L497.4 424.8L499.7 433.8L502.7 428.2L504.7 431.8L508.7 442.1L511.3 435.8L513.3 419.4L515.7 423.8L518.7 429.4L521.7 444.7L524.2 449.3L526.6 435.8L528.6 427.8L531.2 422.2L533.6 411.9L535.6 414.3L538.6 418.8L540.6 419.4L543 421.8L545.6 416.8L549.1 410.3L551.5 428.8L553.9 425.8L556.5 422.2L558.5 416.8L560.5 405.9L563.5 425.8L567.5 430.2L571.9 437.8L574.4 426.8L577 429.4L579.4 435.8L582.4 449.7L584 451.3L584.9 452.1L587.9 455.7L591.9 450.7L594.3 453.7L596.5 439.4L598.8 444.7L601.4 434.8L605.8 428.8L608.8 429.4L610.8 425.8L612.8 419.4L615.4 420.8L617.8 430.2L620.8 434.8L623.3 431.4L626.7 439.4L628.7 439.4L632.1 412.9L634.7 420.8L637.3 429.8L639.7 430.8L642.1 442.7L645.7 448.7L648.6 458.1L650.6 457.3L650.6 378L6 378z" fill="#9fd8f0" clip-path="url(#os)"/>
<path d="M6 412.3L11 404.9L15 401.5L17.3 411.5L19.9 400.3L23.9 398.5L26.9 406.9L30.9 416.8L32.9 428.8L35.5 438.8L38.9 424.8L41.8 422.8L44.8 439.8L48.2 425.8L51.8 440.7L54.8 442.7L57.4 442.1L60.8 449.3L62.8 445.7L64.8 425.8L67.7 434.8L72.7 446.7L74.7 444.7L80.7 455.7L83.7 462.7L85.3 470L87.7 469.2L89.7 474.6L91.6 474L93.2 475.6L95.6 458.7L98.6 450.7L101.6 448.1L104.6 455.7L106.6 453.3L109.6 460.1L112.6 443.7L116.5 434.8L119.5 437.8L122.9 442.1L125.5 435.8L128.5 433.8L130.5 429.8L132.5 420.8L134.9 426.2L137.5 416.8L140.5 409.9L143.4 412.3L147.4 404.9L152 395.9L152.4 394.9L155 401.5L157 390.4L159 392.3L162.9 392.9L164.9 394.9L166.3 403.9L168.9 406.9L172.3 417.8L174.9 416.8L177.5 409.9L179.5 411.9L181.9 421.8L184.9 411.9L187.8 404.9L190.8 417.8L193.8 427.8L196.8 433.8L199.8 437.8L202.2 431.8L205.4 436.8L207.4 435.8L208.8 427.8L211.3 437.8L214.7 439.8L218.7 446.7L220.7 446.7L222.7 436.8L224.7 448.7L227.3 446.7L228.7 441.7L231.3 453.7L233.7 461.7L237.6 464.1L239.6 451.7L242.6 446.7L244.6 441.7L247.6 421.8L250.6 420.2L253.6 418.8L256.6 413.9L258.6 409.9L261.1 417.8L263.1 420.2L265.5 416.8L267.5 413.9L270.5 403.9L274.5 394.9L277.1 407.9L279.5 415.8L281.9 407.9L285.1 404.3L287.8 417.8L290.4 413.9L292.4 408.3L296 409.9L297 413.9L299 417.8L301 415.8L303.6 427.8L305.9 416.8L308.3 422.8L311.9 420.8L315.5 432.8L317.5 427.8L321.9 436.8L325.5 430.2L328.9 425.8L331.4 418.8L333.4 420.8L335.8 429.8L339.8 439.8L342.2 434.8L344.2 449.7L346.2 440.7L348.8 438.8L351.4 434.8L353.4 438.8L355.7 435.8L357.7 426.8L360.1 425.4L364.1 430.2L367.7 420.2L370.7 416.8L373.3 409.9L375.7 410.9L378.1 408.9L380 404.9L382.6 420.2L384.6 410.9L388.6 398.9L392.6 395.9L395.6 392.9L398.6 392.3L400.6 394.9L402.6 394.3L405.1 401.9L407.9 413.9L410.5 429.8L412.5 434.8L414.5 435.8L418.5 428.8L420.9 420.2L423.5 429.4L425.9 428.8L428.5 424.8L430.8 426.8L433.4 433.8L436.4 440.2L440 438.8L443 430.8L446 417.8L448.9 407.9L451.9 401.9L454.3 402.3L456.9 409.9L458.9 408.9L461.3 398.9L463.9 404.9L466.3 408.9L468.3 398.9L470.9 395.5L473.8 396.3L475.4 396.9L477.2 390.4L479.4 396.9L482.2 395.9L484.2 406.9L486.2 411.9L488.2 406.9L490.8 414.9L493.4 420.2L495.8 427.8L497.4 424.8L499.7 433.8L502.7 428.2L504.7 431.8L508.7 442.1L511.3 435.8L513.3 419.4L515.7 423.8L518.7 429.4L521.7 444.7L524.2 449.3L526.6 435.8L528.6 427.8L531.2 422.2L533.6 411.9L535.6 414.3L538.6 418.8L540.6 419.4L543 421.8L545.6 416.8L549.1 410.3L551.5 428.8L553.9 425.8L556.5 422.2L558.5 416.8L560.5 405.9L563.5 425.8L567.5 430.2L571.9 437.8L574.4 426.8L577 429.4L579.4 435.8L582.4 449.7L584 451.3L584.9 452.1L587.9 455.7L591.9 450.7L594.3 453.7L596.5 439.4L598.8 444.7L601.4 434.8L605.8 428.8L608.8 429.4L610.8 425.8L612.8 419.4L615.4 420.8L617.8 430.2L620.8 434.8L623.3 431.4L626.7 439.4L628.7 439.4L632.1 412.9L634.7 420.8L637.3 429.8L639.7 430.8L642.1 442.7L645.7 448.7L648.6 458.1L650.6 457.3" fill="none" stroke="#f47a20" stroke-width="1" stroke-linejoin="round"/>
<path d="M4.8 80.8C12.4 83.4 35.3 90.7 50.4 96.4C65.5 102.1 83.2 109.5 95.5 115.1C107.8 120.6 118.6 127 124 129.7C129.4 132.4 125.6 130.3 128 131.4C130.5 132.6 134.4 134.9 138.7 136.7C143 138.5 145.9 140 154.1 142.2C162.2 144.4 178 147.7 187.4 149.7C196.9 151.7 206.4 153.4 210.8 154.2C215.2 155.1 209.9 153.7 214 154.7C218.1 155.6 229.8 158.5 235.4 160C241.1 161.6 244.4 162.8 248 163.7C251.7 164.7 251.9 164.7 257.4 165.9C262.9 167 273 169.5 280.8 170.9C288.6 172.2 296.6 172.9 304.1 174C311.5 175.1 319.8 176.5 325.4 177.3C331.1 178.1 334.4 178.2 338 178.7C341.7 179.2 343.3 179.8 347.4 180.4C351.5 181.1 358 182.1 362.4 182.6C366.9 183.1 369.9 183.4 374.1 183.4C378.3 183.4 382.5 183.1 387.5 182.6C392.5 182.1 398.6 181.1 404.2 180.4C409.7 179.7 416.9 178.9 420.9 178.4C424.8 178 422.8 178 428 177.6C433.3 177.2 440.8 176.9 452.4 176C464 175.1 485.5 173.2 497.5 172.1C509.4 171.1 517.2 170.6 524 169.8C530.8 169 535.3 167.8 538 167.1C540.8 166.5 537.1 166.9 540.7 166C544.3 165 554 162.9 559.6 161.5C565.1 160 568.9 158.4 574.1 157.1C579.3 155.8 584.8 154.7 590.8 153.8C596.8 152.9 603.9 152.3 610 151.8C616.1 151.2 622.1 150.9 627.5 150.6C632.9 150.3 638.3 150.3 642.3 150.1C646.3 149.9 650 149.7 651.5 149.6" fill="none" stroke="#707070" stroke-width="2.6"/>
<path d="M5.7 122.6C13.1 124.5 40.1 131.6 50.4 134.3C60.7 136.9 64 137.5 67.4 138.4C70.8 139.4 66.3 137.7 70.8 140C75.2 142.3 85.3 147.8 94.2 152.5C103 157.3 118.4 165.4 124 168.4C129.6 171.5 125.6 169.9 128 170.9C130.5 171.9 134.4 172.9 138.7 174.3C143 175.6 148.7 177.5 154.1 178.8C159.4 180.1 165.2 181 170.7 182.1C176.3 183.2 181.9 184.7 187.4 185.4C193 186.2 199.7 186.5 204.1 186.8C208.6 187 211.2 187 214 187.1C216.8 187.1 217.3 187.1 220.8 187.1C224.4 187.2 231 187.2 235.4 187.4C239.9 187.7 242.9 188.3 247.7 188.6C252.5 188.9 256.7 189.2 264.1 189.4C271.5 189.6 285.4 189.9 292 190.1C298.7 190.2 296.3 190.4 304 190.5C311.7 190.5 329.7 190.5 338 190.4C346.4 190.3 349.2 190.9 354.1 190.1C359 189.4 363.3 187.2 367.4 185.9C371.6 184.7 375.2 184 379.1 182.6C383 181.2 386.6 179.2 390.8 177.6C395 176 400.3 174 404.2 173.1C408 172.2 411.8 172.5 414 172.1C416.2 171.8 415.2 171.2 417.5 170.9C419.9 170.6 424.5 170.6 428 170.4C431.6 170.2 432.8 170.4 439 169.8C445.3 169.2 457.4 168.4 465.8 166.8C474.1 165.2 481.3 162.6 489.1 160.1C497 157.6 507 153.6 512.8 151.8C518.6 150 519.8 150.2 524 149.3C528.2 148.4 535.3 147.1 538 146.4C540.8 145.8 537.1 146.2 540.7 145.4C544.3 144.7 553.2 142.8 559.6 141.8C566 140.7 573.1 139.8 579.1 139.3C585.1 138.8 590.6 139.3 595.8 138.8C600.9 138.2 605.2 136.9 610 135.9C614.7 135 618.9 134 624.2 133.1C629.4 132.2 637.5 131.1 641.5 130.6C645.5 130.1 646.4 130.1 648 130.1C649.7 130 650.9 130.2 651.5 130.2" fill="none" stroke="#18a848" stroke-width="1"/>
<path d="M4 156.7C6.8 157.3 15.1 158.4 20.7 160C26.3 161.6 32.4 164.3 37.4 166.4C42.4 168.5 46.8 171.2 50.7 172.6C54.6 173.9 56.3 174.4 60.8 174.7C65.2 175 71.6 173.5 77.5 174.2C83.3 175 90 177.6 95.8 179.2C101.7 180.9 107.8 182.8 112.5 184.2C117.2 185.6 121.5 186.7 124 187.6C126.5 188.5 125.3 188.6 127.7 189.6C130.2 190.6 134.5 192.3 138.9 193.6C143.3 194.8 148.8 196.2 154.1 197.1C159.4 197.9 165.2 198.4 170.8 198.8C176.4 199.2 182.2 199.5 187.7 199.4C193.3 199.3 199.8 198.2 204.1 198.1C208.5 198.1 211.2 199.4 214 199.2C216.8 199.1 218.9 197.5 220.8 197.1C222.8 196.7 223.3 197.2 225.7 196.7C228.1 196.3 231.8 195.4 235.4 194.7C239.1 194 243.5 193.4 247.7 192.5C251.9 191.6 256.9 190.3 260.7 189.2C264.6 188.1 267.4 187 270.8 185.9C274.1 184.8 277.7 183.3 280.8 182.6C283.8 181.8 285.2 181.5 289.1 181.4C293 181.2 298 181.6 304.1 181.6C310.1 181.5 319.8 181.3 325.4 181.1C331.1 180.8 335.2 180.3 338 180.1C340.9 179.8 338.9 180.2 342.4 179.8C345.9 179.4 354.4 178.4 359.1 177.6C363.8 176.8 366.9 176 370.8 174.8C374.7 173.5 378.6 171.8 382.5 170.1C386.4 168.4 390.5 166.3 394.2 164.7C397.8 163.2 400.8 161.7 404.2 160.9C407.5 160.1 410.1 160.1 414.1 159.8C418.1 159.4 425.3 159 428 158.7C430.8 158.5 427.2 158.4 430.7 158.1C434.2 157.8 443.2 158 449.1 156.8C454.9 155.6 460.5 153 465.8 150.9C471 148.8 475.5 146.5 480.8 144.3C486.1 142 492.1 139.5 497.5 137.6C502.8 135.6 508.4 133.7 512.8 132.6C517.3 131.5 521.6 131.2 524 130.9C526.4 130.6 525.2 131.1 527.5 130.9C529.9 130.7 535.8 129.9 538 129.7C540.2 129.5 537.1 130.5 540.7 129.7C544.3 129 554.8 126.2 559.6 125.1C564.3 124 565.5 124 569.1 123.1C572.6 122.2 576.3 119.9 580.8 119.7C585.2 119.6 590.9 121.4 595.8 122.1C600.7 122.7 605.2 123.2 610 123.7C614.7 124.2 618.9 124.6 624.2 125.1C629.4 125.5 637.5 125.8 641.5 126.3C645.5 126.8 646.4 127.7 648 128.1C649.7 128.4 650.9 128.3 651.5 128.3" fill="none" stroke="#f4a818" stroke-width="1.9"/>
<path d="M4.8 182.6C6.4 181.3 10.8 178.3 14 175.1C17.2 171.9 21 166.4 24 163.4C27.1 160.3 29.6 158.1 32.4 156.7C35.2 155.2 37.7 155.1 40.7 154.7C43.8 154.3 47.7 153.4 50.7 154.2C53.8 154.9 56.3 157.4 59.1 159.2C61.9 161 64.7 163 67.4 165C70.2 167.1 73.3 169.6 75.8 171.7C78.3 173.8 80.3 174.5 82.5 177.6C84.7 180.6 86.8 186.1 89 190C91.3 193.9 93.2 197.2 95.7 200.9C98.2 204.5 101.3 208.1 104.1 211.7C106.8 215.3 109.9 219.6 112.4 222.6C114.9 225.5 117.1 227.4 119.1 229.2C121 231.1 122.4 232.8 124.1 233.7C125.8 234.7 127.4 235.3 129.1 235.1C130.8 234.9 132.2 234.1 134.1 232.6C136.1 231 138.6 227.8 140.8 225.9C143 223.9 145.2 223.2 147.5 220.9C149.7 218.5 152.5 214.2 154.2 211.7C155.8 209.2 156.3 207.9 157.4 206C158.5 204 159.7 202 160.8 200C161.9 198.1 163 196 164.1 194.3C165.2 192.6 166.4 191.5 167.5 190C168.6 188.5 169.1 187 170.7 185.1C172.4 183.2 175.2 180.6 177.4 178.4C179.6 176.3 181.9 174 184.1 172.1C186.3 170.2 188.6 168 190.8 167.1C193 166.1 195.2 166 197.5 166.4C199.7 166.8 201.5 167.8 204.1 169.2C206.8 170.7 210.5 173.7 213.2 175.3C216 177 218.2 177.4 220.8 179.1C223.3 180.7 226.3 183.3 228.3 185.1C230.2 186.9 231 188.3 232.4 190.1C233.8 191.9 234.9 194 236.6 195.9C238.3 197.9 240.6 200.3 242.5 201.6C244.3 202.9 245.8 203.3 247.7 203.9C249.6 204.4 251.6 204.9 254.1 204.8C256.5 204.6 259.9 203.9 262.4 203.1C264.9 202.3 266.9 201.5 269.1 200.1C271.3 198.7 273.8 196.8 275.8 194.7C277.7 192.7 279.1 190 280.8 187.6C282.4 185.1 284.1 182.3 285.8 180.1C287.5 177.8 289.1 175.9 290.8 174.2C292.5 172.5 294.1 171 295.8 169.7C297.5 168.4 299.4 168.6 300.8 166.7C302.2 164.8 302.9 158.8 304 158.4C305.1 158 305.8 163.7 307.5 164.2C309.2 164.6 311.7 161.3 314.1 161.1C316.4 161 319.4 163 321.6 163.4C323.8 163.8 326 163.5 327.5 163.7C329 163.9 329.6 164.6 330.7 164.7C331.8 164.9 333 164.6 334.2 164.7C335.4 164.8 335.5 164.3 337.7 165.2C339.9 166.1 344.1 168.4 347.4 170.1C350.7 171.7 354.6 174.1 357.4 175.1C360.2 176.1 361.9 176.1 364.1 175.9C366.3 175.8 368.6 174.7 370.8 174.3C373 173.8 375.2 173.8 377.5 173.1C379.7 172.4 381.9 171.7 384.1 170.1C386.4 168.5 388.6 165.8 390.8 163.4C393 161 395.3 158.3 397.5 155.9C399.7 153.5 402.2 151 404.2 149.2C406.1 147.4 407.5 146.2 409.2 145C410.8 143.9 412 143 414.1 142.3C416.2 141.6 419.3 141.2 421.6 140.9C423.9 140.6 426.5 140.6 428 140.4C429.6 140.1 428.9 138.7 430.7 139.2C432.5 139.8 436.3 142.4 439 143.8C441.8 145.1 445 147.1 447.4 147.6C449.8 148.1 451 147.9 453.2 146.8C455.5 145.6 458.1 142.9 460.7 140.9C463.4 139 466.3 137.2 469.1 135.1C471.9 132.9 474.9 130.2 477.4 128.1C479.9 126 481.9 124 484.1 122.6C486.3 121.1 488.6 119.9 490.8 119.2C493 118.5 495.2 118.5 497.5 118.4C499.7 118.3 501.9 118.7 504.2 118.7C506.4 118.7 508.6 118.3 510.8 118.4C513.1 118.5 515.3 118.4 517.5 119.2C519.7 120 521.7 121.9 524.1 123C526.4 124 529.3 125 531.6 125.5C533.9 126 536.5 126 538 125.9C539.6 125.8 538.9 125.5 540.7 125.1C542.5 124.7 546.3 124 549 123.4C551.8 122.8 554.6 122.1 557.4 121.4C560.2 120.7 563.2 120.1 565.7 119.2C568.2 118.3 570.2 116.5 572.4 115.9C574.6 115.2 576.9 114.8 579.1 115.4C581.3 115.9 583.5 117.7 585.8 119.2C588 120.7 590.2 122.7 592.4 124.2C594.7 125.8 596.9 127.2 599.1 128.4C601.4 129.7 604 130.8 605.8 131.7C607.6 132.7 608.4 133.8 610 134.2C611.5 134.7 613.2 134.5 615 134.2C616.8 134 618.7 133.1 620.8 132.6C622.9 132 625.3 131.4 627.5 130.9C629.7 130.4 632 129.7 634.2 129.7C636.4 129.7 639.3 130.5 640.9 130.9C642.4 131.3 642.4 131.8 643.5 132.2C644.7 132.6 646.7 132.9 648 133.4C649.2 133.9 650.6 135 651.1 135.3" fill="none" stroke="#3048c8" stroke-width="1"/>
<path d="M6.5 170.9C7.8 169.1 11.7 163.1 14 160C16.4 157 18.7 154.5 20.7 152.5C22.6 150.6 24 149.4 25.7 148.3C27.4 147.3 28.8 146 30.7 146.3C32.7 146.7 35.3 149 37.4 150.4C39.5 151.7 40.7 152.3 43.2 154.2C45.7 156.1 49.8 159.3 52.4 161.7C55.1 164.1 57.1 166.4 59.1 168.4C61 170.3 62.2 172.1 64.1 173.4C66 174.6 68.6 174.6 70.8 175.9C73 177.1 75.3 178.7 77.5 180.9C79.6 183.1 81.5 184.4 83.7 189.2C85.9 194.1 88.4 203.9 90.7 210C93 216.1 95.2 221.4 97.4 225.9C99.6 230.3 102.3 234.5 104.1 236.7C105.8 239 106.1 239.5 107.7 239.2C109.4 239 111.9 236 114.1 235.1C116.3 234.2 118 234.7 120.8 233.7C123.5 232.8 128 231 130.8 229.2C133.6 227.5 135.2 226 137.5 223.4C139.7 220.7 142.1 216.6 144.1 213.4C146.2 210.1 148.1 207.7 149.9 203.8C151.8 199.9 153.7 194.3 155.4 190.1C157 185.8 158.2 181.9 159.9 178.4C161.6 175 163.6 171.5 165.7 169.2C167.8 167 170.5 165.7 172.4 164.7C174.4 163.8 175.8 163.3 177.4 163.7C179.1 164.2 180.8 166.7 182.4 167.6C184.1 168.5 185.5 169.2 187.4 169.2C189.4 169.2 191.6 166.9 194.1 167.6C196.6 168.2 199.7 170.9 202.5 173.1C205.2 175.3 208.9 178.9 210.8 180.9C212.7 182.9 212.5 183.7 214 185.1C215.5 186.4 217.7 187.4 219.9 188.8C222.2 190.3 225.3 192.2 227.4 193.7C229.5 195.2 230.9 196 232.4 198C234 200 235 202.8 236.6 205.5C238.3 208.2 240.6 212.5 242.4 214.3C244.2 216 245.6 216.2 247.4 215.9C249.2 215.7 251.6 214.6 253.2 212.6C254.9 210.7 255.9 207.3 257.4 204.3C258.9 201.2 260.7 197.3 262.4 194.2C264.1 191.2 265.8 188.5 267.4 185.9C269.1 183.2 270.8 180.5 272.4 178.4C274.1 176.3 275.8 174.8 277.4 173.4C279.1 171.9 280.8 171.4 282.4 169.7C284.1 168 285.8 164.9 287.5 163.4C289.1 161.8 290.8 160.9 292.5 160.4C294.1 159.8 295.5 160.3 297.5 160.4C299.4 160.4 301.9 160.8 304.1 160.9C306.3 161 308.5 160.5 310.8 161C313 161.4 315.2 162.4 317.4 163.5C319.7 164.7 322 167.1 324.1 168C326.2 168.9 328.2 169 330 169C331.7 168.9 333.4 167.5 334.9 167.6C336.4 167.6 337.2 168 339 169.2C340.8 170.5 343.5 173.7 345.7 175.1C348 176.5 350.2 176.8 352.4 177.6C354.6 178.4 357.1 179.6 359.1 180.1C361 180.6 362.4 181.1 364.1 180.4C365.8 179.7 367.4 177.7 369.1 175.9C370.8 174.2 372.2 172.1 374.1 170.1C376.1 168.1 378.6 166.1 380.8 163.7C383 161.4 385.2 158.7 387.5 155.9C389.7 153.1 391.9 149.6 394.2 146.7C396.4 143.8 398.9 140.8 400.8 138.4C402.8 135.9 404.2 133.1 405.8 132C407.5 130.9 409.3 131.3 410.8 131.7C412.4 132.1 413.3 133 414.9 134.5C416.6 136.1 419.2 139.3 420.8 140.9C422.3 142.5 423 143.4 424.2 144.2C425.4 145 426.1 145.3 427.7 145.9C429.3 146.5 431.9 147 434 147.6C436.2 148.2 438.5 149.1 440.7 149.3C442.9 149.4 445.6 149.1 447.4 148.4C449.2 147.7 449.9 147 451.6 145.1C453.2 143.1 455.3 139.2 457.4 136.7C459.5 134.2 461.9 132.2 464.1 130.1C466.3 128 468.5 126 470.8 124.2C473 122.4 475.2 120.7 477.4 119.2C479.7 117.7 482.2 116.2 484.1 115C486.1 113.9 487.5 112.9 489.1 112.5C490.8 112.2 492.2 112.3 494.1 113C496.1 113.7 498.6 115.4 500.8 116.7C503 118 505.3 119.5 507.5 120.9C509.7 122.3 511.9 123.9 514.2 125.1C516.4 126.2 519.1 126.8 520.8 127.6C522.6 128.3 523.3 129.7 524.9 129.7C526.6 129.8 528.6 128.9 530.8 127.7C532.9 126.6 535.5 124.3 537.7 123C539.9 121.7 541.9 120.8 544 120.1C546.2 119.3 548.5 119.2 550.7 118.4C552.9 117.6 555.2 116.2 557.4 115.1C559.6 113.9 562.1 112.1 564.1 111.7C566 111.3 567.4 111.9 569.1 112.5C570.7 113.2 572.1 114.9 574.1 115.9C576 116.9 578.8 117 580.8 118.4C582.7 119.8 584.1 122.1 585.8 124.2C587.4 126.3 589.1 128.8 590.8 130.9C592.4 133 594.1 135.1 595.8 136.8C597.5 138.4 599.4 140 600.8 140.9C602.2 141.8 602.7 142.4 604.1 142.1C605.5 141.8 607.5 140.4 609.1 139.3C610.8 138.1 612.5 136.2 614.2 135.1C615.8 134 617.2 132.9 619.2 132.6C621.1 132.3 623.6 133.4 625.8 133.4C628.1 133.4 630.3 132.9 632.5 132.6C634.7 132.3 637.6 131.7 639.2 131.7C640.8 131.8 641.3 132.4 642.1 132.7C642.9 132.9 643.3 133 644.2 133.4C645.1 133.8 646.2 134.2 647.2 135C648.3 135.9 650 137.9 650.6 138.5" fill="none" stroke="#e428d0" stroke-width="1"/>
<path d="M8.5 153V158.5M17 147.9V155.7M24 134.5V139.3M26.5 137V147.5M31 143.3V150.5M33.2 155.7V163.4M35.4 162.9V171.7M42.7 150.4V157.5M44.6 168.2V174.1M51.6 163.4V174.9M53.6 167.6V177.7M55.8 172.1V181.7M60.8 177.7V187.2M62.8 177.6V184.7M69.1 171.4V180.1M71.6 179.7V188.2M73.8 181.4V194.3M75.8 183.1V191.6M78.6 190.3V196.1M82.9 197.8V214.2M84.9 218.6V234.2M87.4 228.9V238.2M89.4 233.1V248.3M91.5 235.9V247.3M93.7 248.8V257.8M98.7 221.9V234.4M105.7 237.6V248.4M109.7 237.7V251.8M119.1 217.2V229.7M121.3 229.6V239.1M125.8 221.9V229.6M127.9 221.9V228.1M134.6 213.7V220.4M136.6 209.2V217.7M155.1 174.1V180.4M159.4 151.4V159.1M161.6 150.6V159.4M164.1 151.6V165.6M166.2 156.6V166.9M168.2 156.6V166.9M170.7 164.6V175.4M172.7 167.6V178.6M175.4 170.3V176.6M179.6 162.2V170.1M181.6 169.4V180.1M188.6 147.5V156.4M191.3 155.6V170.9M193.3 165.6V175.4M195.8 176.4V183.4M198 182.1V187.1M200.3 180.6V188.9M204.8 183.3V190.4M207 181.6V188.1M211.3 181.3V190.6M217.7 193.7V201.6M219.8 191.7V201.4M224.9 196.7V207.1M231.5 207.8V217.1M233.7 216.3V228.1M235.7 219V230.5M237.9 221.5V245M252.1 185.9V192.2M254.1 184.9V193.4M260.7 175.9V187.4M262.9 184.6V191.6M276.6 149.2V165.2M278.8 163.2V173.7M283.6 150.8V159.5M288 159.5V169M297.1 156V163.2M299.5 159.5V165.2M301.6 155.3V167.7M304.3 155.6V168.6M313.2 159.7V167.4M315.4 167.9V173.9M317.4 164.7V171.1M319.5 163.1V172.8M321.5 174.8V181.6M324 171.3V177.9M328.5 166.2V171.9M334.9 163.4V170.4M337.1 164.9V175.1M344.4 178.4V196M346.6 180.8V188.9M351.6 175.1V185.3M353.6 178.1V186.1M355.8 178.3V183.9M362.4 171.6V180.9M364.4 170.3V179.1M376.1 151.4V160.1M382.8 151.7V162.2M396.3 122.2V128M398.7 123.5V131.7M400.8 121.7V130.8M405.3 125V132.2M407.5 130.7V137.7M409.5 135.2V143.9M411.7 138.7V155.1M413.8 147.2V155.9M414.3 148.8V154.8M418.7 142.6V150.9M422.8 143.3V149.9M427.7 139.3V147.1M429.9 141.8V148.6M431.9 143.4V152.4M434 142.6V151.9M436.5 149.8V157.8M441.2 148.1V157.9M455.7 126.6V133.2M457.7 128.2V134.6M459.9 128.7V132.2M463.7 120.7V126.9M466.1 124.1V129.6M470.8 112.4V117.9M472.8 109.9V116.5M479.6 103.2V112.5M481.6 103.4V111.2M483.8 106.2V113.7M486.1 108.5V119.2M490.8 110.9V118M492.8 116.2V120.2M495.3 118.7V125.6M497.5 118.6V128.2M506.7 119.7V129.4M508.7 123.4V135.9M515.8 115.2V121.4M517.8 118.2V127.1M520 125.4V133.2M522.2 133.7V140.6M524.2 134.4V143.9M538.2 109.2V118.7M540.2 111V120.1M549.4 104.4V115.6M551.5 106.5V121.9M563.2 100.2V114.9M565.4 111.2V119.1M567.7 115.4V118.9M570.7 117.9V128.4M572.7 115.1V127.7M579.1 114.6V124.6M581.3 119.7V131.7M583.6 132.2V144.3M590.3 140.8V146.9M592.4 138.1V148.3M594.6 143.8V149.4M606.1 123.4V132.4M608.3 125.9V133.6M617 123.9V130.6M619.5 130.2V136.6M626.2 128.7V139.1M628.3 133.2V140.8M635.4 120.4V127.9M637.5 122.7V134.2M642.1 131.6V144.8M646.4 145.9V155.4M648.6 148.1V162" stroke="#1458d0" stroke-width="1" fill="none"/>
<path d="M6.5 158.5V169.4M11 149.9V157.2M12.7 149.9V156.2M15 145V152.2M19.9 140.8V147.2M21.5 136V145M28.7 143.8V152.2M37.4 160.9V170.4M39.9 154.5V162.7M47.4 155.5V170.2M49.2 154.2V170.6M57.8 170.1V178.6M64.9 160.9V173.9M67.1 170.9V182.7M80.7 197.3V204.4M96.2 233.9V243.6M101.1 223.9V232.9M103.6 224.6V233.9M107.7 236.1V244.9M112.4 231.4V242.6M114.6 230.6V243.9M117.1 222.9V233.2M123.6 230.9V237.9M130.4 220.6V229.1M132.4 210.7V221.7M140.5 195.2V210.2M142.8 198.2V211.2M145.3 191.3V211.2M148.2 186.3V192M150.7 176.4V185.4M152.7 168.4V179.1M157.1 150.9V160.7M177.4 165.4V170.2M184.1 165.9V179.9M186.6 155.7V175.1M202.6 181.1V188.1M209.1 176.9V187.6M213.6 189.6V202.6M215.3 190.7V200.9M222.3 191.2V198.6M227 201.6V207.4M229.4 196.9V204.3M240.4 219.5V236.5M244.9 209.9V223.1M247.4 191.9V206.6M249.6 186.4V195.2M256.6 181.1V186.9M258.7 174.2V183.1M264.9 182.6V193.2M267.4 179.1V187.4M269.6 168.2V175M272.1 155.8V171.7M274.4 148.5V158.5M281.1 162.4V170.2M285.8 152.7V160.5M290.5 160.5V169.9M292.5 151.5V160.8M295 151.8V159.5M306.5 154.4V166.9M308.7 158.1V165.9M311 156.7V164.7M326.5 167.2V177.1M330.7 159.1V164.4M332.7 157.9V163.6M339.6 176.8V185.4M342.1 173.6V181.9M348.6 184.6V191.5M357.8 171.9V178.6M359.9 171.1V181.8M367.1 165.9V175.4M369.1 164.1V170.6M371.6 158.6V167.9M373.8 151.7V164.2M378.3 151.6V158.4M380.3 149.1V157.6M385 148.9V158.6M387.1 142.5V152.2M389.1 134V146M391.6 129.9V140.4M394.2 127.9V139.7M403.3 123V128.8M416.5 147.3V155.8M420.7 139.3V150.9M425.2 146.4V154.3M439 153.1V158.6M443.7 147.8V156.4M445.7 143.3V148.8M448.2 137.1V141.1M450.7 128.6V138.1M452.9 126.1V132.4M461.6 121.4V127.4M468.3 115.9V126.2M475.3 113.5V117.2M477.4 104.4V113M488.3 108.4V116.5M499.6 118.7V127.7M502 121.9V130.2M504.2 122.2V129.1M511.2 126.7V134.6M513.3 116V125.6M527.2 126.7V138.6M529.2 125.4V133.2M533.5 109.5V118.7M535.7 111.2V115.7M542.4 117.4V123.1M544.5 113.4V126.1M547 108.7V118.6M554.1 113.6V124.1M556.2 111.7V121.9M558.7 108.5V116.2M561.1 97.2V107.7M574.9 114.2V127.1M577.1 114.9V123.7M585.8 141.1V152.8M587.9 142.4V152.4M596.6 136.3V141.4M599.1 139.4V149.6M601.1 134.9V138.9M603.6 132.1V137.1M610.8 126.1V133.9M613 122.2V131.1M615 122.4V127.4M621.7 133.6V140.9M623.8 131.1V136.1M630.8 125.7V136.4M632.8 116.1V128.7M639.7 128.2V133.6M644 145.2V153M651.1 158.3V166.6" stroke="#e8180c" stroke-width="1" fill="none"/>
<path d="M7.6 155h1.8V158h-1.8zM16.1 150.4h1.8V154.7h-1.8zM23.1 135h1.8V138.3h-1.8zM25.6 137.5h1.8V145h-1.8zM30.1 145.8h1.8V150h-1.8zM32.3 156.7h1.8V160.9h-1.8zM34.5 163.4h1.8V169.2h-1.8zM41.8 150.9h1.8V155h-1.8zM43.7 169.2h1.8V172.6h-1.8zM50.7 165.9h1.8V173.4h-1.8zM52.7 170.1h1.8V176.7h-1.8zM54.9 172.6h1.8V179.2h-1.8zM59.9 179.2h1.8V186.7h-1.8zM61.9 180.1h1.8V184.2h-1.8zM68.2 173.4h1.8V177.6h-1.8zM70.7 181.7h1.8V186.7h-1.8zM72.9 183.4h1.8V191.8h-1.8zM74.9 185.1h1.8V190.1h-1.8zM77.7 191.8h1.8V195.1h-1.8zM82 198.3h1.8V211.7h-1.8zM84 220.1h1.8V231.7h-1.8zM86.5 230.9h1.8V236.7h-1.8zM88.5 235.1h1.8V246.8h-1.8zM90.6 238.4h1.8V246.8h-1.8zM92.8 249.3h1.8V256.8h-1.8zM97.8 223.4h1.8V233.4h-1.8zM104.8 240.1h1.8V245.9h-1.8zM108.8 239.2h1.8V249.3h-1.8zM118.2 219.2h1.8V229.2h-1.8zM120.4 230.1h1.8V237.6h-1.8zM124.9 223.4h1.8V227.6h-1.8zM127 223.4h1.8V227.6h-1.8zM133.7 214.2h1.8V218.4h-1.8zM135.7 209.7h1.8V216.7h-1.8zM154.2 175.1h1.8V178.4h-1.8zM158.5 153.4h1.8V157.6h-1.8zM160.7 152.6h1.8V158.4h-1.8zM163.2 152.6h1.8V165.1h-1.8zM165.3 157.6h1.8V165.9h-1.8zM167.3 157.6h1.8V165.9h-1.8zM169.8 165.1h1.8V173.4h-1.8zM171.8 170.1h1.8V177.6h-1.8zM174.5 171.8h1.8V175.1h-1.8zM178.7 164.2h1.8V167.6h-1.8zM180.7 170.9h1.8V177.6h-1.8zM187.7 148.4h1.8V155.9h-1.8zM190.4 157.6h1.8V168.4h-1.8zM192.4 167.6h1.8V173.4h-1.8zM194.9 178.4h1.8V181.4h-1.8zM197.1 182.6h1.8V185.1h-1.8zM199.4 182.6h1.8V188.4h-1.8zM203.9 184.3h1.8V188.4h-1.8zM206.1 182.6h1.8V187.6h-1.8zM210.4 181.8h1.8V190.1h-1.8zM216.8 194.2h1.8V200.1h-1.8zM218.9 194.2h1.8V200.9h-1.8zM224 199.2h1.8V205.1h-1.8zM230.6 209.3h1.8V215.1h-1.8zM232.8 216.8h1.8V227.6h-1.8zM234.8 221h1.8V228.5h-1.8zM237 223.5h1.8V231.8h-1.8zM251.2 188.4h1.8V191.7h-1.8zM253.2 185.9h1.8V190.9h-1.8zM259.8 178.4h1.8V185.9h-1.8zM262 185.1h1.8V190.1h-1.8zM275.7 151.7h1.8V164.2h-1.8zM277.9 164.2h1.8V171.7h-1.8zM282.7 153.3h1.8V157.5h-1.8zM287.1 160h1.8V167.5h-1.8zM296.2 157.5h1.8V161.7h-1.8zM298.6 160h1.8V164.2h-1.8zM300.7 155.8h1.8V166.7h-1.8zM303.4 157.6h1.8V167.6h-1.8zM312.3 161.7h1.8V165.9h-1.8zM314.5 168.4h1.8V173.4h-1.8zM316.5 166.7h1.8V170.1h-1.8zM318.6 165.1h1.8V171.8h-1.8zM320.6 176.8h1.8V180.1h-1.8zM323.1 171.8h1.8V175.9h-1.8zM327.6 166.7h1.8V170.9h-1.8zM334 165.9h1.8V168.4h-1.8zM336.2 165.9h1.8V172.6h-1.8zM343.5 180.9h1.8V193.5h-1.8zM345.7 181.8h1.8V188.4h-1.8zM350.7 177.6h1.8V184.3h-1.8zM352.7 180.1h1.8V185.1h-1.8zM354.9 179.3h1.8V183.4h-1.8zM361.5 172.6h1.8V178.4h-1.8zM363.5 171.8h1.8V177.6h-1.8zM375.2 153.4h1.8V157.6h-1.8zM381.9 154.2h1.8V161.7h-1.8zM395.4 124.7h1.8V127.5h-1.8zM397.8 125h1.8V129.2h-1.8zM399.9 124.2h1.8V128.3h-1.8zM404.4 127.5h1.8V131.7h-1.8zM406.6 131.7h1.8V136.7h-1.8zM408.6 136.7h1.8V143.4h-1.8zM410.8 139.2h1.8V152.6h-1.8zM412.9 149.2h1.8V153.4h-1.8zM413.4 149.3h1.8V154.3h-1.8zM417.8 145.1h1.8V148.4h-1.8zM421.9 144.3h1.8V148.4h-1.8zM426.8 141.8h1.8V145.1h-1.8zM429 144.3h1.8V147.6h-1.8zM431 145.9h1.8V150.9h-1.8zM433.1 145.1h1.8V150.9h-1.8zM435.6 151.8h1.8V156.8h-1.8zM440.3 150.1h1.8V155.9h-1.8zM454.8 127.6h1.8V131.7h-1.8zM456.8 129.2h1.8V132.6h-1.8zM459 129.7h1.8V131.7h-1.8zM462.8 121.7h1.8V125.9h-1.8zM465.2 125.1h1.8V127.6h-1.8zM469.9 113.9h1.8V115.9h-1.8zM471.9 110.9h1.8V115h-1.8zM478.7 104.7h1.8V110h-1.8zM480.7 105.4h1.8V109.2h-1.8zM482.9 106.7h1.8V111.7h-1.8zM485.2 110h1.8V116.7h-1.8zM489.9 113.4h1.8V117.5h-1.8zM491.9 116.7h1.8V119.2h-1.8zM494.4 119.2h1.8V125.1h-1.8zM496.6 120.1h1.8V126.7h-1.8zM505.8 121.7h1.8V128.4h-1.8zM507.8 125.9h1.8V133.4h-1.8zM514.9 116.7h1.8V120.9h-1.8zM516.9 119.2h1.8V125.1h-1.8zM519.1 125.9h1.8V131.7h-1.8zM521.3 134.2h1.8V140.1h-1.8zM523.3 135.9h1.8V143.4h-1.8zM537.3 111.7h1.8V116.7h-1.8zM539.3 112.5h1.8V117.6h-1.8zM548.5 105.9h1.8V115.1h-1.8zM550.6 107.5h1.8V120.9h-1.8zM562.3 101.7h1.8V113.4h-1.8zM564.5 111.7h1.8V117.6h-1.8zM566.8 115.9h1.8V118.4h-1.8zM569.8 118.4h1.8V125.9h-1.8zM571.8 117.6h1.8V126.7h-1.8zM578.2 115.1h1.8V122.6h-1.8zM580.4 121.7h1.8V129.2h-1.8zM582.7 134.2h1.8V141.8h-1.8zM589.4 141.8h1.8V145.9h-1.8zM591.5 140.1h1.8V146.8h-1.8zM593.7 144.3h1.8V148.4h-1.8zM605.2 125.9h1.8V130.9h-1.8zM607.4 128.4h1.8V132.6h-1.8zM616.1 125.9h1.8V130.1h-1.8zM618.6 131.7h1.8V135.1h-1.8zM625.3 129.2h1.8V137.6h-1.8zM627.4 134.2h1.8V139.3h-1.8zM634.5 120.9h1.8V125.9h-1.8zM636.6 124.2h1.8V131.7h-1.8zM641.2 134.1h1.8V144.3h-1.8zM645.5 146.4h1.8V154.4h-1.8zM647.7 150.1h1.8V159.5h-1.8z" fill="#1458d0"/>
<path d="M5.6 160h1.8V168.4h-1.8zM10.1 150.4h1.8V154.7h-1.8zM11.8 150.4h1.8V154.7h-1.8zM14.1 147.5h1.8V151.7h-1.8zM19 141.3h1.8V146.7h-1.8zM20.6 138h1.8V143h-1.8zM27.8 145.8h1.8V151.7h-1.8zM36.5 163.4h1.8V168.4h-1.8zM39 155h1.8V161.7h-1.8zM46.5 157.5h1.8V169.2h-1.8zM48.3 156.7h1.8V170.1h-1.8zM56.9 172.6h1.8V177.6h-1.8zM64 163.4h1.8V173.4h-1.8zM66.2 173.4h1.8V181.7h-1.8zM79.8 198.3h1.8V203.4h-1.8zM95.3 235.9h1.8V242.6h-1.8zM100.2 225.9h1.8V230.9h-1.8zM102.7 225.1h1.8V233.4h-1.8zM106.8 237.6h1.8V243.4h-1.8zM111.5 233.4h1.8V240.1h-1.8zM113.7 232.6h1.8V243.4h-1.8zM116.2 223.4h1.8V231.7h-1.8zM122.7 233.4h1.8V235.9h-1.8zM129.5 222.6h1.8V227.6h-1.8zM131.5 211.7h1.8V219.2h-1.8zM139.6 196.7h1.8V209.2h-1.8zM141.9 199.2h1.8V209.2h-1.8zM144.4 193.3h1.8V209.2h-1.8zM147.3 186.8h1.8V191h-1.8zM149.8 178.4h1.8V183.4h-1.8zM151.8 170.9h1.8V177.6h-1.8zM156.2 153.4h1.8V159.2h-1.8zM176.5 165.9h1.8V169.2h-1.8zM183.2 168.4h1.8V178.4h-1.8zM185.7 156.7h1.8V172.6h-1.8zM201.7 182.1h1.8V187.6h-1.8zM208.2 178.4h1.8V185.1h-1.8zM212.7 190.1h1.8V200.1h-1.8zM214.4 191.7h1.8V198.4h-1.8zM221.4 191.7h1.8V197.6h-1.8zM226.1 202.6h1.8V205.9h-1.8zM228.5 198.4h1.8V201.8h-1.8zM239.5 221h1.8V236h-1.8zM244 210.9h1.8V222.6h-1.8zM246.5 193.4h1.8V205.1h-1.8zM248.7 188.4h1.8V194.2h-1.8zM255.7 182.6h1.8V185.9h-1.8zM257.8 176.7h1.8V182.6h-1.8zM264 185.1h1.8V191.7h-1.8zM266.5 180.1h1.8V185.9h-1.8zM268.7 169.2h1.8V172.5h-1.8zM271.2 158.3h1.8V169.2h-1.8zM273.5 150h1.8V157.5h-1.8zM280.2 163.4h1.8V169.2h-1.8zM284.9 154.2h1.8V160h-1.8zM289.6 162.5h1.8V168.4h-1.8zM291.6 152.5h1.8V158.3h-1.8zM294.1 153.3h1.8V157.5h-1.8zM305.6 155.9h1.8V165.9h-1.8zM307.8 160.1h1.8V163.4h-1.8zM310.1 159.2h1.8V164.2h-1.8zM325.6 169.2h1.8V175.1h-1.8zM329.8 160.1h1.8V163.4h-1.8zM331.8 158.4h1.8V162.6h-1.8zM338.7 179.3h1.8V183.4h-1.8zM341.2 175.1h1.8V180.9h-1.8zM347.7 185.1h1.8V191h-1.8zM356.9 173.4h1.8V177.6h-1.8zM359 172.6h1.8V179.3h-1.8zM366.2 168.4h1.8V173.4h-1.8zM368.2 165.1h1.8V170.1h-1.8zM370.7 160.1h1.8V165.9h-1.8zM372.9 154.2h1.8V161.7h-1.8zM377.4 152.6h1.8V155.9h-1.8zM379.4 150.1h1.8V155.1h-1.8zM384.1 150.9h1.8V157.6h-1.8zM386.2 145h1.8V151.7h-1.8zM388.2 135h1.8V145h-1.8zM390.7 130.9h1.8V138.4h-1.8zM393.3 130.4h1.8V139.2h-1.8zM402.4 125h1.8V128.3h-1.8zM415.6 149.3h1.8V154.3h-1.8zM419.8 141.8h1.8V148.4h-1.8zM424.3 148.4h1.8V151.8h-1.8zM438.1 155.1h1.8V158.1h-1.8zM442.8 149.3h1.8V155.9h-1.8zM444.8 144.3h1.8V146.8h-1.8zM447.3 137.6h1.8V140.1h-1.8zM449.8 130.1h1.8V137.6h-1.8zM452 127.1h1.8V130.9h-1.8zM460.7 123.4h1.8V125.4h-1.8zM467.4 118.4h1.8V124.2h-1.8zM474.4 115h1.8V116.7h-1.8zM476.5 105.9h1.8V112.5h-1.8zM487.4 110.9h1.8V115h-1.8zM498.7 119.2h1.8V126.7h-1.8zM501.1 123.4h1.8V129.2h-1.8zM503.3 124.2h1.8V127.6h-1.8zM510.3 129.2h1.8V132.6h-1.8zM512.4 117.5h1.8V125.1h-1.8zM526.3 129.2h1.8V137.6h-1.8zM528.3 125.9h1.8V131.7h-1.8zM532.6 110h1.8V116.7h-1.8zM534.8 111.7h1.8V114.2h-1.8zM541.5 118.4h1.8V122.6h-1.8zM543.6 115.9h1.8V125.1h-1.8zM546.1 109.2h1.8V117.6h-1.8zM553.2 115.1h1.8V122.6h-1.8zM555.3 114.2h1.8V120.9h-1.8zM557.8 110h1.8V114.2h-1.8zM560.2 99.7h1.8V106.7h-1.8zM574 116.7h1.8V125.1h-1.8zM576.2 115.9h1.8V121.7h-1.8zM584.9 142.6h1.8V151.8h-1.8zM587 143.4h1.8V150.9h-1.8zM595.7 136.8h1.8V140.9h-1.8zM598.2 140.9h1.8V147.6h-1.8zM600.2 135.9h1.8V138.4h-1.8zM602.7 132.6h1.8V135.1h-1.8zM609.9 127.6h1.8V133.4h-1.8zM612.1 124.2h1.8V130.1h-1.8zM614.1 123.4h1.8V125.9h-1.8zM620.8 135.1h1.8V138.4h-1.8zM622.9 132.6h1.8V135.1h-1.8zM629.9 126.7h1.8V135.9h-1.8zM631.9 117.6h1.8V126.7h-1.8zM638.8 129.2h1.8V132.6h-1.8zM643.1 145.7h1.8V151.5h-1.8zM650.2 158.8h1.8V164.6h-1.8z" fill="#e8180c"/>
<path d="M531.500 123l-1.600-2.200h1.100v-3h1v3h1.100z M558.900 112l-1.600-2.200h1.100v-3h1v3h1.100z" fill="#f01818"/>
<path d="M96 256l6-4v3.400h6v1.200h-6v3.400z" fill="#1818f0"/>
<path d="M561.500 101.700l-6-4v3.400h-8v1.200h8v3.400z" fill="#f01818"/>
<path d="M5 274.500H737M5 376.200H737M5 479.500H737" stroke="#9a9a9a" fill="none"/>
<path d="M680.500 67V495" stroke="#9a9a9a" fill="none"/>
<path d="M50.5 480V495 M95.5 480V495 M138.5 480V495 M187.5 480V495 M235.5 480V495 M280.5 480V495 M325.5 480V495 M374.5 480V495 M419.5 480V495 M465.5 480V495 M512.5 480V495 M559.5 480V495 M609.5 480V495" stroke="#9a9a9a" fill="none"/>
<path d="M680 268.5h5 M680 238.5h5 M680 208.5h5 M680 178.5h5 M680 148.5h5 M680 118.5h5 M680 88.5h5 M680 262.5h2.5 M680 256.5h2.5 M680 250.5h2.5 M680 244.5h2.5 M680 232.5h2.5 M680 226.5h2.5 M680 220.5h2.5 M680 214.5h2.5 M680 202.5h2.5 M680 196.5h2.5 M680 190.5h2.5 M680 184.5h2.5 M680 172.5h2.5 M680 166.5h2.5 M680 160.5h2.5 M680 154.5h2.5 M680 142.5h2.5 M680 136.5h2.5 M680 130.5h2.5 M680 124.5h2.5 M680 112.5h2.5 M680 106.5h2.5 M680 100.5h2.5 M680 94.5h2.5 M680 295.5h5 M680 335.5h5 M680 387.5h5 M680 428.5h5 M680 470.5h5 M680 374.5h2.5 M680 366.6h2.5 M680 358.7h2.5 M680 350.8h2.5 M680 342.9h2.5 M680 327.1h2.5 M680 319.2h2.5 M680 311.3h2.5 M680 303.4h2.5 M680 287.6h2.5 M680 461.7h2.5 M680 453.4h2.5 M680 445.1h2.5 M680 436.8h2.5 M680 420.2h2.5 M680 411.9h2.5 M680 403.6h2.5 M680 395.3h2.5" stroke="#777" fill="none"/>
<text x="687" y="93.100" textLength="38.400" lengthAdjust="spacingAndGlyphs" fill="#444" font-size="12.500">2,700.00</text>
<rect x="681" y="67" width="55" height="21.500" fill="#d5e1f0"/>
<text x="681.300" y="77.400" textLength="41.700" lengthAdjust="spacingAndGlyphs" fill="#e8382e" font-size="13">LC:15.47</text>
<text x="681.300" y="88.300" textLength="41.700" lengthAdjust="spacingAndGlyphs" fill="#2f62c8" font-size="13">HC:-7.61</text>
<rect x="684.300" y="153.300" width="51" height="10.500" fill="#e0160e"/><text x="687" y="163.200" textLength="37.700" lengthAdjust="spacingAndGlyphs" fill="#fff" font-size="12.500">2,465.07</text>
<text x="687" y="173.200" textLength="26.800" lengthAdjust="spacingAndGlyphs" fill="#e8281e" font-size="12">0.09%</text>
<rect x="683.800" y="340.600" width="51.200" height="10.700" fill="#1450c8"/><text x="687.700" y="350.400" textLength="34.400" lengthAdjust="spacingAndGlyphs" fill="#fff" font-size="12.500">354,973</text>
<text x="687.200" y="361" textLength="32" lengthAdjust="spacingAndGlyphs" fill="#2255cc" font-size="12">83.04%</text>
<rect x="728" y="278" width="7" height="6" fill="#444"/><rect x="728" y="379" width="7" height="6" fill="#444"/>
</svg>
<div class="a" style="left:7.5px;top:71.5px;width:5px;height:5px;background:#c4c4c4;border:1px solid #8c8c8c"></div>
<div class="a" style="left:14.500px;top:67.500px;width:66px;height:13px;background:#ececec;border:1px solid #b8b8b8"></div>
<div class="a" style="left:83px;top:71.5px;width:5px;height:5px;background:#c4c4c4;border:1px solid #8c8c8c"></div>
<div class="a" style="left:7.5px;top:279.5px;width:5px;height:5px;background:#c4c4c4;border:1px solid #8c8c8c"></div>
<div class="a" style="left:7.5px;top:381.5px;width:5px;height:5px;background:#c4c4c4;border:1px solid #8c8c8c"></div>
<div class="a" style="left:0;top:513.500px;width:743px;height:3.500px;background:linear-gradient(#b8b8b8,#989898)"></div>
<div class="a" style="left:4px;top:496px;width:409px;height:14px;background:#f7f7f7"></div>
<div class="a" style="left:4px;top:496px;width:15px;height:14px;background:#f6f6f6;border:1px solid #b0b0b0;border-top-color:#fff;border-left-color:#fff;border-bottom-color:#888;border-right-color:#888"></div>
<svg class="a" style="left:0;top:495px" width="743" height="17" viewBox="0 495 743 17">
<path d="M9 503l4-4v8z" fill="#111"/>
<rect x="400" y="496" width="13" height="14" fill="#f6f6f6"/>
<g fill="#f4f4f4" stroke="#aaa"><rect x="413.500" y="496.500" width="14" height="13"/><rect x="428.500" y="496.500" width="14" height="13"/><rect x="443.500" y="496.500" width="14" height="13"/><rect x="458.500" y="496.500" width="14" height="13"/></g>
<path d="M419 499.500v7l4-3.500z M436 499.500v7l-4-3.500z M440 499.500v7l-4-3.500z M448 500.500h5v5h-5z M462 499.500v7l4-3.500z M466 499.500v7l4-3.500z" fill="#111"/>
<rect x="473" y="496.500" width="70" height="13" fill="#f4f4f4" stroke="#333" stroke-dasharray="1 1"/>
<path d="M477 501.500h30M509 501.500h30" stroke="#666"/><path d="M507.500 498v8" stroke="#444" stroke-width="1.400"/>
<path d="M479 508v1.500M485 508v1.500M491 508v1.500M497 508v1.500M503 508v1.500M509 508v1.500M515 508v1.500M521 508v1.500M527 508v1.500M533 508v1.500M539 508v1.500" stroke="#333"/>
<g fill="none" stroke="#888">
<rect x="546.500" y="498.500" width="8" height="7"/><rect x="551.500" y="503.500" width="5" height="5" fill="#fff"/><path d="M551.500 506h5M554 503.500v5"/>
<rect x="561.500" y="498.500" width="7" height="6"/><rect x="564.500" y="501.500" width="7" height="7" fill="#fff"/><path d="M564.500 503h7" stroke-width="2"/>
<rect x="575.500" y="498.500" width="10" height="9" stroke-dasharray="1 1"/><path d="M577 504l3 2 4-4"/>
<rect x="590" y="496" width="13" height="14" fill="#fff" stroke="none"/>
<path d="M593 499v9M591 500h10M593 501l7 5" stroke="#666" stroke-width="1.300"/>
<path d="M606 504h11M607 507l4-6 3 5 3-2" />
<path d="M623 498v10M621 506l3-5 3 6 3-3"/>
<path d="M636 507l8-9M634 508l4-5 3 4 3-2" stroke="#666"/>
<path d="M651 503l5-4h5l-5 4zM651 503v4h5v-4M656 503l5-4v4l-5 4" />
<path d="M659 506h4v3h-4z" fill="#555" stroke="#555"/>
<rect x="665.500" y="502.500" width="8" height="6"/><rect x="668.500" y="498.500" width="8" height="5" stroke-dasharray="1 1"/><path d="M667 507l2-2 2 1 2-2" stroke="#444"/>
<circle cx="684.500" cy="501.500" r="3.600" stroke="#666" stroke-width="1.300"/><path d="M687 504.500l3.500 4" stroke="#666" stroke-width="1.800"/>
</g>
<path d="M697 503.500h8" stroke="#444" stroke-width="2"/>
<path d="M711 503.500h9M715.500 499v9" stroke="#333" stroke-width="2"/>
</svg>
<div class="a" style="left:726px;top:497px;font-size:13px;font-weight:bold;color:#444">A</div>
<svg class="a" style="left:0;top:0;pointer-events:none;will-change:transform" width="743" height="517" viewBox="0 0 743 517" font-family="'Liberation Sans','NanumGothic','Noto Sans CJK KR',sans-serif">
<text x="5" y="15" textLength="57.5" lengthAdjust="spacingAndGlyphs" fill="#fff" font-size="12" >종합(KOSPI)</text>
<text x="25.6" y="39.5" textLength="11" lengthAdjust="spacingAndGlyphs" fill="#1a1a1a" font-size="12" >업</text>
<text x="56" y="39.5" textLength="11.2" lengthAdjust="spacingAndGlyphs" fill="#1a1a1a" font-size="12" >전</text>
<text x="74" y="39" textLength="14" lengthAdjust="spacingAndGlyphs" fill="#222" font-size="12" >001</text>
<text x="177" y="39.5" textLength="57.7" lengthAdjust="spacingAndGlyphs" fill="#333" font-size="12" >종합(KOSPI)</text>
<text x="250.5" y="39.5" textLength="11" lengthAdjust="spacingAndGlyphs" fill="#fff" font-size="12" >일</text>
<text x="267" y="39.5" textLength="11" lengthAdjust="spacingAndGlyphs" fill="#1a1a1a" font-size="12" >주</text>
<text x="284" y="39.5" textLength="11" lengthAdjust="spacingAndGlyphs" fill="#1a1a1a" font-size="12" >월</text>
<text x="300.5" y="39.5" textLength="11" lengthAdjust="spacingAndGlyphs" fill="#1a1a1a" font-size="12" >년</text>
<text x="319" y="39.5" textLength="11" lengthAdjust="spacingAndGlyphs" fill="#1a1a1a" font-size="12" >분</text>
<text x="335.5" y="39.5" textLength="11" lengthAdjust="spacingAndGlyphs" fill="#909090" font-size="12" >초</text>
<text x="352" y="39.5" textLength="11" lengthAdjust="spacingAndGlyphs" fill="#1a1a1a" font-size="12" >틱</text>
<text x="374" y="39" textLength="4" lengthAdjust="spacingAndGlyphs" fill="#8c8c8c" font-size="12" >1</text>
<text x="390" y="39" textLength="5" lengthAdjust="spacingAndGlyphs" fill="#8c8c8c" font-size="12" >3</text>
<text x="407" y="39" textLength="5" lengthAdjust="spacingAndGlyphs" fill="#8c8c8c" font-size="12" >5</text>
<text x="421.5" y="39" textLength="10" lengthAdjust="spacingAndGlyphs" fill="#8c8c8c" font-size="12" >10</text>
<text x="437.8" y="39" textLength="10.5" lengthAdjust="spacingAndGlyphs" fill="#8c8c8c" font-size="12" >20</text>
<text x="454.6" y="39" textLength="10.5" lengthAdjust="spacingAndGlyphs" fill="#8c8c8c" font-size="12" >30</text>
<text x="471.2" y="39" textLength="10.5" lengthAdjust="spacingAndGlyphs" fill="#8c8c8c" font-size="12" >60</text>
<text x="486.4" y="39" textLength="14.5" lengthAdjust="spacingAndGlyphs" fill="#8c8c8c" font-size="12" >120</text>
<text x="546.6" y="39" textLength="15.7" lengthAdjust="spacingAndGlyphs" fill="#222" font-size="12" >287</text>
<text x="565" y="39" textLength="21" lengthAdjust="spacingAndGlyphs" fill="#444" font-size="12" >/600</text>
<text x="667" y="39" textLength="52" lengthAdjust="spacingAndGlyphs" fill="#222" font-size="12" >2023/09/27</text>
<text x="15" y="59" textLength="42.5" lengthAdjust="spacingAndGlyphs" fill="#e8281e" font-size="12" >2,465.07</text>
<text x="91.3" y="59" textLength="20.7" lengthAdjust="spacingAndGlyphs" fill="#e8281e" font-size="12" >2.10</text>
<text x="123" y="59" textLength="31.3" lengthAdjust="spacingAndGlyphs" fill="#e8281e" font-size="12" >+0.09%</text>
<text x="158.5" y="59.5" textLength="31.3" lengthAdjust="spacingAndGlyphs" fill="#1a1a1a" font-size="12" >거래량</text>
<text x="233.5" y="59" textLength="36.5" lengthAdjust="spacingAndGlyphs" fill="#1a1a1a" font-size="12" >354,973</text>
<text x="282.6" y="59" textLength="31.8" lengthAdjust="spacingAndGlyphs" fill="#2255cc" font-size="12" >83.04%</text>
<text x="319.4" y="59.5" textLength="41.5" lengthAdjust="spacingAndGlyphs" fill="#1a1a1a" font-size="12" >거래대금</text>
<text x="378.5" y="59" textLength="46.5" lengthAdjust="spacingAndGlyphs" fill="#1a1a1a" font-size="12" >6,256,700</text>
<text x="425.5" y="59.5" textLength="21" lengthAdjust="spacingAndGlyphs" fill="#1a1a1a" font-size="12" >백만</text>
<text x="450.3" y="59.5" textLength="8.1" lengthAdjust="spacingAndGlyphs" fill="#1a1a1a" font-size="12" >시</text>
<text x="469" y="59" textLength="42.2" lengthAdjust="spacingAndGlyphs" fill="#2255cc" font-size="12" >2,447.99</text>
<text x="521.5" y="59.5" textLength="8.8" lengthAdjust="spacingAndGlyphs" fill="#1a1a1a" font-size="12" >고</text>
<text x="540.3" y="59" textLength="42.1" lengthAdjust="spacingAndGlyphs" fill="#e8281e" font-size="12" >2,469.72</text>
<text x="592" y="59.5" textLength="9.5" lengthAdjust="spacingAndGlyphs" fill="#1a1a1a" font-size="12" >저</text>
<text x="611.5" y="59" textLength="36.8" lengthAdjust="spacingAndGlyphs" fill="#2255cc" font-size="12" >2,445.5</text>
<text x="657" y="59.5" textLength="20.4" lengthAdjust="spacingAndGlyphs" fill="#1a1a1a" font-size="12" >매수</text>
<text x="691.5" y="59.5" textLength="20.1" lengthAdjust="spacingAndGlyphs" fill="#1a1a1a" font-size="12" >매도</text>
<text x="724.7" y="59.5" textLength="8.8" lengthAdjust="spacingAndGlyphs" fill="#1a1a1a" font-size="12" >평</text>
<text x="18.4" y="78.3" textLength="60" lengthAdjust="spacingAndGlyphs" fill="#444" font-size="12" >종합(KOSPI)</text>
<text x="94.4" y="78.3" textLength="43.3" lengthAdjust="spacingAndGlyphs" fill="#e020c8" font-size="12" >종가 단순</text>
<text x="144" y="78" textLength="8.8" lengthAdjust="spacingAndGlyphs" fill="#e020c8" font-size="11.5" >10</text>
<text x="161" y="78" textLength="9.4" lengthAdjust="spacingAndGlyphs" fill="#2848d0" font-size="11.5" >20</text>
<text x="177.8" y="78" textLength="9.8" lengthAdjust="spacingAndGlyphs" fill="#f0a800" font-size="11.5" >60</text>
<text x="197" y="78" textLength="13.8" lengthAdjust="spacingAndGlyphs" fill="#1aa040" font-size="11.5" >120</text>
<text x="219" y="78" textLength="15" lengthAdjust="spacingAndGlyphs" fill="#666" font-size="11.5" >200</text>
<text x="17.2" y="287.5" textLength="31.3" lengthAdjust="spacingAndGlyphs" fill="#2a9aa8" font-size="12" >거래량</text>
<text x="57.1" y="287.5" textLength="19.6" lengthAdjust="spacingAndGlyphs" fill="#e020c8" font-size="12" >단순</text>
<text x="80.8" y="287" textLength="5" lengthAdjust="spacingAndGlyphs" fill="#e020c8" font-size="12" >5</text>
<text x="93.9" y="287" textLength="9.5" lengthAdjust="spacingAndGlyphs" fill="#f0a800" font-size="12" >20</text>
<text x="111.6" y="287" textLength="10.1" lengthAdjust="spacingAndGlyphs" fill="#1aa040" font-size="12" >60</text>
<text x="129.2" y="287" textLength="14.6" lengthAdjust="spacingAndGlyphs" fill="#666" font-size="12" >120</text>
<text x="9.1" y="298" textLength="86.8" lengthAdjust="spacingAndGlyphs" fill="#333" font-size="11.5" >354,973주(83.04%)</text>
<text x="17.8" y="388.5" textLength="30.7" lengthAdjust="spacingAndGlyphs" fill="#f07020" font-size="12" >RSI 14</text>
<text x="6.2" y="491" textLength="36" lengthAdjust="spacingAndGlyphs" fill="#444" font-size="12" >2022/08</text>
<text x="52.2" y="491" textLength="10" lengthAdjust="spacingAndGlyphs" fill="#444" font-size="12" >09</text>
<text x="97.2" y="491" textLength="10" lengthAdjust="spacingAndGlyphs" fill="#444" font-size="12" >10</text>
<text x="140.2" y="491" textLength="10" lengthAdjust="spacingAndGlyphs" fill="#444" font-size="12" >11</text>
<text x="189.2" y="491" textLength="10" lengthAdjust="spacingAndGlyphs" fill="#444" font-size="12" >12</text>
<text x="237.2" y="491" textLength="36" lengthAdjust="spacingAndGlyphs" fill="#444" font-size="12" >2023/01</text>
<text x="282.2" y="491" textLength="10" lengthAdjust="spacingAndGlyphs" fill="#444" font-size="12" >02</text>
<text x="327.2" y="491" textLength="10" lengthAdjust="spacingAndGlyphs" fill="#444" font-size="12" >03</text>
<text x="376.2" y="491" textLength="10" lengthAdjust="spacingAndGlyphs" fill="#444" font-size="12" >04</text>
<text x="421.2" y="491" textLength="10" lengthAdjust="spacingAndGlyphs" fill="#444" font-size="12" >05</text>
<text x="467.2" y="491" textLength="10" lengthAdjust="spacingAndGlyphs" fill="#444" font-size="12" >06</text>
<text x="514.2" y="491" textLength="10" lengthAdjust="spacingAndGlyphs" fill="#444" font-size="12" >07</text>
<text x="561.2" y="491" textLength="10" lengthAdjust="spacingAndGlyphs" fill="#444" font-size="12" >08</text>
<text x="611.2" y="491" textLength="10" lengthAdjust="spacingAndGlyphs" fill="#444" font-size="12" >09</text>
<text x="687" y="491" textLength="26" lengthAdjust="spacingAndGlyphs" fill="#444" font-size="12" >09/27</text>
<text x="687" y="273.1" textLength="38.4" lengthAdjust="spacingAndGlyphs" fill="#444" font-size="12.5" >2,100.00</text>
<text x="687" y="243.1" textLength="38.4" lengthAdjust="spacingAndGlyphs" fill="#444" font-size="12.5" >2,200.00</text>
<text x="687" y="213.1" textLength="38.4" lengthAdjust="spacingAndGlyphs" fill="#444" font-size="12.5" >2,300.00</text>
<text x="687" y="183.1" textLength="38.4" lengthAdjust="spacingAndGlyphs" fill="#444" font-size="12.5" >2,400.00</text>
<text x="687" y="153.1" textLength="38.4" lengthAdjust="spacingAndGlyphs" fill="#444" font-size="12.5" >2,500.00</text>
<text x="687" y="123.1" textLength="38.4" lengthAdjust="spacingAndGlyphs" fill="#444" font-size="12.5" >2,600.00</text>
<text x="687.7" y="299.6" textLength="30.8" lengthAdjust="spacingAndGlyphs" fill="#444" font-size="12.5" >1,000K</text>
<text x="687.2" y="338.7" textLength="34.9" lengthAdjust="spacingAndGlyphs" fill="#444" font-size="12.5" >500,000</text>
<text x="687.7" y="391" textLength="24.4" lengthAdjust="spacingAndGlyphs" fill="#444" font-size="12.5" >75.00</text>
<text x="687.7" y="432.2" textLength="24.4" lengthAdjust="spacingAndGlyphs" fill="#444" font-size="12.5" >50.00</text>
<text x="687.7" y="474.2" textLength="24.4" lengthAdjust="spacingAndGlyphs" fill="#444" font-size="12.5" >25.00</text>
<text x="107.7" y="259.3" textLength="101.3" lengthAdjust="spacingAndGlyphs" fill="#2222ee" font-size="12.5" >최저 2,134.77 (09/30)</text>
<text x="441" y="105.4" textLength="101" lengthAdjust="spacingAndGlyphs" fill="#f02020" font-size="12.5" >최고 2,668.21 (08/01)</text>
</svg>
</body></html>
